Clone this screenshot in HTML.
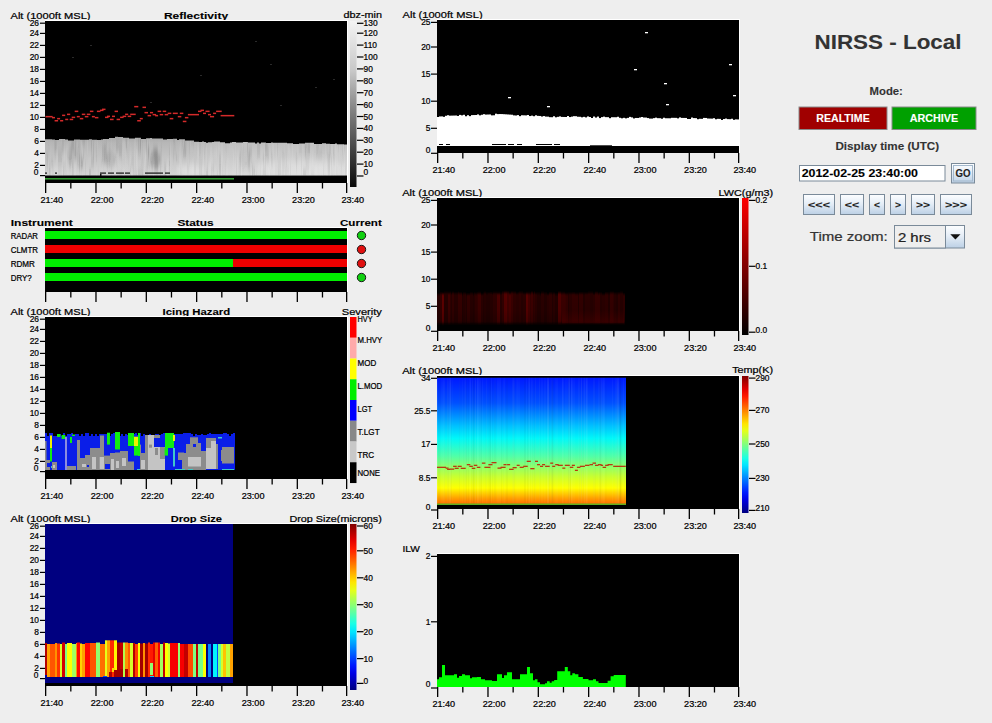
<!DOCTYPE html><html><head><meta charset="utf-8"><style>html,body{margin:0;padding:0;background:#eeeeee;overflow:hidden}svg{display:block}text{font-family:"Liberation Sans",sans-serif}</style></head><body>
<svg width="992" height="723" viewBox="0 0 992 723">
<rect x="0.00" y="0.00" width="992.00" height="723.00" fill="#eeeeee"/>
<text x="10.5" y="18.6" font-size="9.4" text-anchor="start" fill="#000" stroke="#000" stroke-width="0.22" textLength="80.0" lengthAdjust="spacingAndGlyphs">Alt (1000ft MSL)</text>
<text x="163.9" y="18.6" font-size="9.4" font-weight="bold" text-anchor="start" fill="#000" stroke="#000" stroke-width="0.1" textLength="64.2" lengthAdjust="spacingAndGlyphs">Reflectivity</text>
<text x="343.6" y="18.4" font-size="9.4" text-anchor="start" fill="#000" stroke="#000" stroke-width="0.22" textLength="38.4" lengthAdjust="spacingAndGlyphs">dbz-min</text>
<rect x="45.00" y="20.00" width="303.00" height="1.00" fill="#ffffff"/>
<rect x="347.00" y="20.00" width="1.00" height="163.00" fill="#ffffff"/>
<rect x="45.00" y="21.00" width="302.00" height="162.00" fill="#000"/>
<defs><linearGradient id="gcl" x1="0" y1="0" x2="0" y2="1"><stop offset="0" stop-color="#a0a0a0"/><stop offset="0.25" stop-color="#b6b6b6"/><stop offset="1" stop-color="#d4d4d4"/></linearGradient><filter id="fbv" x="-5%" y="-20%" width="110%" height="140%"><feGaussianBlur stdDeviation="0.7 3"/></filter><clipPath id="cpcl"><rect x="45" y="130" width="302" height="45.5"/></clipPath></defs>
<rect x="45.00" y="132.00" width="302.00" height="43.50" fill="url(#gcl)"/>
<g filter="url(#fbv)" clip-path="url(#cpcl)">
<rect x="129.00" y="150.47" width="3.00" height="13.36" fill="rgba(255,255,255,0.040)"/>
<rect x="307.00" y="141.79" width="3.00" height="15.55" fill="rgba(0,0,0,0.075)"/>
<rect x="80.00" y="140.36" width="3.00" height="20.03" fill="rgba(255,255,255,0.085)"/>
<rect x="253.00" y="157.79" width="1.00" height="5.68" fill="rgba(0,0,0,0.043)"/>
<rect x="233.00" y="135.86" width="1.00" height="19.82" fill="rgba(255,255,255,0.026)"/>
<rect x="277.00" y="140.96" width="1.00" height="19.57" fill="rgba(0,0,0,0.048)"/>
<rect x="285.00" y="167.04" width="1.00" height="9.70" fill="rgba(0,0,0,0.075)"/>
<rect x="107.00" y="155.72" width="1.00" height="16.18" fill="rgba(0,0,0,0.047)"/>
<rect x="319.00" y="150.16" width="3.00" height="12.30" fill="rgba(0,0,0,0.052)"/>
<rect x="242.00" y="144.83" width="3.00" height="21.68" fill="rgba(255,255,255,0.031)"/>
<rect x="46.00" y="153.19" width="2.00" height="16.01" fill="rgba(0,0,0,0.072)"/>
<rect x="329.00" y="171.26" width="2.00" height="7.25" fill="rgba(255,255,255,0.067)"/>
<rect x="222.00" y="163.19" width="1.00" height="23.59" fill="rgba(0,0,0,0.037)"/>
<rect x="264.00" y="148.87" width="1.00" height="18.67" fill="rgba(255,255,255,0.067)"/>
<rect x="253.00" y="168.96" width="2.00" height="8.26" fill="rgba(0,0,0,0.072)"/>
<rect x="296.00" y="153.73" width="1.00" height="18.34" fill="rgba(0,0,0,0.086)"/>
<rect x="269.00" y="164.80" width="1.00" height="20.48" fill="rgba(255,255,255,0.054)"/>
<rect x="177.00" y="159.36" width="2.00" height="5.70" fill="rgba(0,0,0,0.037)"/>
<rect x="119.00" y="171.39" width="3.00" height="19.92" fill="rgba(0,0,0,0.054)"/>
<rect x="59.00" y="170.25" width="2.00" height="22.99" fill="rgba(0,0,0,0.046)"/>
<rect x="263.00" y="152.92" width="2.00" height="23.05" fill="rgba(0,0,0,0.053)"/>
<rect x="116.00" y="163.43" width="1.00" height="5.20" fill="rgba(255,255,255,0.068)"/>
<rect x="180.00" y="156.97" width="2.00" height="17.88" fill="rgba(255,255,255,0.080)"/>
<rect x="252.00" y="162.81" width="3.00" height="21.24" fill="rgba(0,0,0,0.030)"/>
<rect x="93.00" y="141.91" width="1.00" height="17.83" fill="rgba(0,0,0,0.075)"/>
<rect x="189.00" y="139.68" width="1.00" height="15.77" fill="rgba(0,0,0,0.043)"/>
<rect x="130.00" y="141.72" width="1.00" height="22.15" fill="rgba(255,255,255,0.034)"/>
<rect x="303.00" y="167.33" width="3.00" height="20.48" fill="rgba(0,0,0,0.075)"/>
<rect x="77.00" y="149.72" width="2.00" height="16.34" fill="rgba(0,0,0,0.080)"/>
<rect x="66.00" y="144.05" width="3.00" height="8.12" fill="rgba(255,255,255,0.071)"/>
<rect x="338.00" y="138.65" width="2.00" height="17.02" fill="rgba(255,255,255,0.056)"/>
<rect x="194.00" y="160.88" width="2.00" height="15.52" fill="rgba(0,0,0,0.059)"/>
<rect x="148.00" y="148.14" width="1.00" height="11.36" fill="rgba(0,0,0,0.090)"/>
<rect x="82.00" y="158.18" width="1.00" height="21.15" fill="rgba(255,255,255,0.088)"/>
<rect x="271.00" y="152.42" width="1.00" height="15.26" fill="rgba(0,0,0,0.081)"/>
<rect x="69.00" y="159.48" width="3.00" height="5.84" fill="rgba(255,255,255,0.039)"/>
<rect x="263.00" y="151.87" width="1.00" height="9.73" fill="rgba(0,0,0,0.047)"/>
<rect x="64.00" y="152.75" width="3.00" height="14.84" fill="rgba(255,255,255,0.070)"/>
<rect x="179.00" y="144.08" width="1.00" height="23.33" fill="rgba(255,255,255,0.047)"/>
<rect x="127.00" y="146.57" width="1.00" height="11.23" fill="rgba(0,0,0,0.047)"/>
<rect x="85.00" y="154.33" width="1.00" height="17.40" fill="rgba(255,255,255,0.046)"/>
<rect x="130.00" y="161.05" width="1.00" height="9.12" fill="rgba(255,255,255,0.043)"/>
<rect x="178.00" y="138.03" width="1.00" height="5.57" fill="rgba(255,255,255,0.056)"/>
<rect x="304.00" y="142.40" width="3.00" height="16.96" fill="rgba(0,0,0,0.039)"/>
<rect x="284.00" y="149.86" width="3.00" height="14.21" fill="rgba(255,255,255,0.067)"/>
<rect x="184.00" y="138.66" width="2.00" height="24.50" fill="rgba(0,0,0,0.035)"/>
<rect x="54.00" y="137.77" width="3.00" height="16.60" fill="rgba(0,0,0,0.048)"/>
<rect x="167.00" y="171.66" width="1.00" height="23.83" fill="rgba(255,255,255,0.030)"/>
<rect x="277.00" y="148.71" width="3.00" height="5.06" fill="rgba(255,255,255,0.032)"/>
<rect x="316.00" y="166.11" width="1.00" height="11.17" fill="rgba(255,255,255,0.049)"/>
<rect x="160.00" y="156.27" width="1.00" height="21.48" fill="rgba(0,0,0,0.061)"/>
<rect x="343.00" y="137.70" width="1.00" height="13.72" fill="rgba(255,255,255,0.078)"/>
<rect x="122.00" y="137.21" width="3.00" height="21.30" fill="rgba(255,255,255,0.062)"/>
<rect x="218.00" y="140.65" width="1.00" height="8.07" fill="rgba(255,255,255,0.040)"/>
<rect x="81.00" y="159.72" width="2.00" height="8.73" fill="rgba(255,255,255,0.027)"/>
<rect x="183.00" y="148.04" width="3.00" height="8.24" fill="rgba(0,0,0,0.061)"/>
<rect x="125.00" y="136.20" width="1.00" height="9.65" fill="rgba(0,0,0,0.045)"/>
<rect x="144.00" y="161.93" width="1.00" height="15.49" fill="rgba(255,255,255,0.025)"/>
<rect x="302.00" y="136.50" width="1.00" height="12.05" fill="rgba(255,255,255,0.057)"/>
<rect x="55.00" y="161.26" width="1.00" height="14.88" fill="rgba(255,255,255,0.031)"/>
<rect x="188.00" y="160.14" width="1.00" height="9.35" fill="rgba(255,255,255,0.074)"/>
<rect x="203.00" y="149.44" width="1.00" height="23.84" fill="rgba(255,255,255,0.086)"/>
<rect x="225.00" y="141.41" width="1.00" height="10.30" fill="rgba(0,0,0,0.022)"/>
<rect x="138.00" y="169.44" width="2.00" height="15.72" fill="rgba(0,0,0,0.082)"/>
<rect x="275.00" y="162.38" width="3.00" height="22.66" fill="rgba(0,0,0,0.045)"/>
<rect x="136.00" y="148.02" width="1.00" height="18.44" fill="rgba(255,255,255,0.081)"/>
<rect x="261.00" y="170.32" width="1.00" height="20.10" fill="rgba(255,255,255,0.089)"/>
<rect x="153.00" y="169.32" width="1.00" height="15.46" fill="rgba(255,255,255,0.083)"/>
<rect x="127.00" y="143.88" width="1.00" height="13.49" fill="rgba(255,255,255,0.065)"/>
<rect x="153.00" y="144.36" width="2.00" height="13.60" fill="rgba(0,0,0,0.046)"/>
<rect x="65.00" y="154.90" width="3.00" height="14.18" fill="rgba(255,255,255,0.022)"/>
<rect x="199.00" y="162.25" width="3.00" height="19.62" fill="rgba(0,0,0,0.090)"/>
<rect x="61.00" y="135.14" width="3.00" height="18.29" fill="rgba(255,255,255,0.061)"/>
<rect x="145.00" y="152.98" width="1.00" height="22.40" fill="rgba(255,255,255,0.059)"/>
<rect x="58.00" y="148.71" width="3.00" height="21.53" fill="rgba(0,0,0,0.055)"/>
<rect x="333.00" y="158.25" width="1.00" height="16.97" fill="rgba(255,255,255,0.069)"/>
<rect x="236.00" y="159.27" width="1.00" height="19.69" fill="rgba(0,0,0,0.052)"/>
<rect x="215.00" y="167.95" width="1.00" height="6.54" fill="rgba(255,255,255,0.042)"/>
<rect x="180.00" y="138.86" width="1.00" height="17.34" fill="rgba(255,255,255,0.065)"/>
<rect x="299.00" y="163.53" width="2.00" height="14.90" fill="rgba(255,255,255,0.022)"/>
<rect x="49.00" y="142.15" width="3.00" height="7.82" fill="rgba(255,255,255,0.024)"/>
<rect x="75.00" y="139.56" width="1.00" height="22.61" fill="rgba(0,0,0,0.066)"/>
<rect x="272.00" y="153.05" width="1.00" height="15.75" fill="rgba(0,0,0,0.058)"/>
<rect x="232.00" y="140.28" width="1.00" height="13.04" fill="rgba(255,255,255,0.051)"/>
<rect x="269.00" y="164.21" width="1.00" height="5.40" fill="rgba(0,0,0,0.065)"/>
<rect x="345.00" y="168.38" width="1.00" height="19.98" fill="rgba(0,0,0,0.044)"/>
<rect x="183.00" y="147.10" width="1.00" height="11.57" fill="rgba(0,0,0,0.035)"/>
<rect x="148.00" y="140.61" width="1.00" height="17.48" fill="rgba(0,0,0,0.079)"/>
<rect x="130.00" y="154.78" width="1.00" height="7.31" fill="rgba(255,255,255,0.048)"/>
<rect x="151.00" y="154.93" width="1.00" height="6.70" fill="rgba(255,255,255,0.037)"/>
<rect x="170.00" y="142.54" width="1.00" height="16.53" fill="rgba(255,255,255,0.077)"/>
<rect x="249.00" y="146.20" width="3.00" height="11.36" fill="rgba(0,0,0,0.084)"/>
<rect x="62.00" y="156.35" width="3.00" height="5.93" fill="rgba(255,255,255,0.048)"/>
<rect x="138.00" y="136.40" width="3.00" height="17.81" fill="rgba(0,0,0,0.075)"/>
<rect x="179.00" y="154.63" width="2.00" height="8.28" fill="rgba(255,255,255,0.044)"/>
<rect x="244.00" y="168.91" width="3.00" height="10.86" fill="rgba(255,255,255,0.028)"/>
<rect x="211.00" y="165.36" width="3.00" height="7.76" fill="rgba(0,0,0,0.070)"/>
<rect x="102.00" y="144.98" width="3.00" height="18.54" fill="rgba(0,0,0,0.083)"/>
<rect x="307.00" y="160.56" width="2.00" height="17.55" fill="rgba(255,255,255,0.053)"/>
<rect x="146.00" y="136.73" width="1.00" height="17.52" fill="rgba(0,0,0,0.063)"/>
<rect x="262.00" y="153.60" width="2.00" height="8.25" fill="rgba(0,0,0,0.035)"/>
<rect x="51.00" y="159.68" width="2.00" height="9.61" fill="rgba(0,0,0,0.066)"/>
<rect x="315.00" y="166.30" width="1.00" height="8.80" fill="rgba(255,255,255,0.069)"/>
<rect x="233.00" y="152.76" width="1.00" height="11.57" fill="rgba(255,255,255,0.082)"/>
<rect x="192.00" y="160.13" width="1.00" height="20.44" fill="rgba(255,255,255,0.067)"/>
<rect x="170.00" y="161.61" width="1.00" height="11.08" fill="rgba(255,255,255,0.059)"/>
<rect x="247.00" y="136.03" width="1.00" height="16.56" fill="rgba(0,0,0,0.084)"/>
<rect x="107.00" y="167.27" width="3.00" height="22.87" fill="rgba(255,255,255,0.078)"/>
<rect x="308.00" y="142.83" width="2.00" height="8.34" fill="rgba(0,0,0,0.083)"/>
<rect x="111.00" y="154.21" width="1.00" height="5.97" fill="rgba(255,255,255,0.070)"/>
<rect x="277.00" y="139.11" width="1.00" height="14.47" fill="rgba(0,0,0,0.025)"/>
<rect x="306.00" y="156.57" width="3.00" height="18.06" fill="rgba(0,0,0,0.081)"/>
<rect x="328.00" y="139.29" width="2.00" height="11.98" fill="rgba(255,255,255,0.069)"/>
<rect x="282.00" y="158.13" width="1.00" height="11.25" fill="rgba(255,255,255,0.069)"/>
<rect x="316.00" y="147.77" width="1.00" height="23.72" fill="rgba(255,255,255,0.045)"/>
<rect x="187.00" y="164.39" width="2.00" height="8.23" fill="rgba(0,0,0,0.088)"/>
<rect x="154.00" y="153.67" width="1.00" height="5.84" fill="rgba(0,0,0,0.022)"/>
<rect x="110.00" y="166.34" width="1.00" height="17.43" fill="rgba(255,255,255,0.032)"/>
<rect x="133.00" y="169.36" width="3.00" height="11.17" fill="rgba(0,0,0,0.038)"/>
<rect x="241.00" y="164.29" width="1.00" height="22.10" fill="rgba(255,255,255,0.072)"/>
<rect x="198.00" y="146.88" width="1.00" height="11.08" fill="rgba(255,255,255,0.050)"/>
<rect x="282.00" y="152.05" width="3.00" height="18.86" fill="rgba(0,0,0,0.075)"/>
<rect x="70.00" y="167.57" width="3.00" height="23.23" fill="rgba(255,255,255,0.026)"/>
<rect x="130.00" y="165.23" width="1.00" height="23.19" fill="rgba(0,0,0,0.063)"/>
<rect x="203.00" y="154.28" width="3.00" height="19.44" fill="rgba(255,255,255,0.020)"/>
<rect x="91.00" y="156.24" width="3.00" height="12.27" fill="rgba(0,0,0,0.062)"/>
<rect x="295.00" y="162.74" width="1.00" height="8.73" fill="rgba(255,255,255,0.041)"/>
<rect x="199.00" y="137.55" width="2.00" height="23.23" fill="rgba(0,0,0,0.031)"/>
<rect x="330.00" y="144.68" width="1.00" height="12.05" fill="rgba(0,0,0,0.058)"/>
<rect x="85.00" y="158.73" width="1.00" height="22.77" fill="rgba(0,0,0,0.052)"/>
<rect x="327.00" y="152.51" width="3.00" height="20.43" fill="rgba(0,0,0,0.068)"/>
<rect x="318.00" y="150.55" width="1.00" height="9.59" fill="rgba(255,255,255,0.083)"/>
<rect x="136.00" y="171.14" width="1.00" height="15.56" fill="rgba(0,0,0,0.083)"/>
<rect x="180.00" y="165.81" width="2.00" height="14.62" fill="rgba(0,0,0,0.062)"/>
<rect x="89.00" y="167.02" width="2.00" height="17.87" fill="rgba(0,0,0,0.064)"/>
<rect x="333.00" y="170.82" width="1.00" height="9.06" fill="rgba(255,255,255,0.058)"/>
<rect x="265.00" y="160.85" width="1.00" height="24.93" fill="rgba(0,0,0,0.079)"/>
<rect x="265.00" y="142.11" width="2.00" height="19.23" fill="rgba(0,0,0,0.088)"/>
<rect x="248.00" y="153.19" width="2.00" height="16.73" fill="rgba(0,0,0,0.083)"/>
<rect x="173.00" y="148.84" width="1.00" height="11.82" fill="rgba(0,0,0,0.050)"/>
<rect x="164.00" y="166.96" width="1.00" height="7.07" fill="rgba(255,255,255,0.066)"/>
<rect x="342.00" y="141.39" width="1.00" height="16.90" fill="rgba(255,255,255,0.070)"/>
<rect x="62.00" y="170.40" width="1.00" height="21.96" fill="rgba(255,255,255,0.054)"/>
<rect x="131.00" y="170.53" width="1.00" height="12.54" fill="rgba(255,255,255,0.041)"/>
<rect x="119.00" y="141.89" width="3.00" height="16.72" fill="rgba(0,0,0,0.065)"/>
<rect x="241.00" y="147.69" width="1.00" height="18.44" fill="rgba(255,255,255,0.034)"/>
<rect x="95.00" y="139.19" width="2.00" height="11.73" fill="rgba(0,0,0,0.028)"/>
<rect x="326.00" y="149.85" width="3.00" height="19.61" fill="rgba(255,255,255,0.039)"/>
<rect x="72.00" y="162.81" width="2.00" height="24.51" fill="rgba(0,0,0,0.057)"/>
<rect x="309.00" y="153.45" width="3.00" height="11.38" fill="rgba(0,0,0,0.027)"/>
<rect x="290.00" y="163.18" width="1.00" height="22.68" fill="rgba(0,0,0,0.076)"/>
<rect x="339.00" y="144.82" width="3.00" height="14.45" fill="rgba(255,255,255,0.039)"/>
<rect x="164.00" y="163.89" width="2.00" height="23.48" fill="rgba(0,0,0,0.074)"/>
<rect x="142.00" y="146.58" width="3.00" height="21.82" fill="rgba(255,255,255,0.040)"/>
<rect x="58.00" y="170.58" width="3.00" height="6.80" fill="rgba(255,255,255,0.039)"/>
<rect x="285.00" y="146.82" width="2.00" height="21.87" fill="rgba(0,0,0,0.050)"/>
<rect x="83.00" y="163.95" width="1.00" height="7.79" fill="rgba(255,255,255,0.058)"/>
<rect x="235.00" y="158.26" width="3.00" height="15.60" fill="rgba(255,255,255,0.088)"/>
<rect x="99.00" y="168.43" width="3.00" height="20.05" fill="rgba(255,255,255,0.030)"/>
<rect x="297.00" y="142.07" width="1.00" height="20.93" fill="rgba(255,255,255,0.036)"/>
<rect x="131.00" y="158.99" width="1.00" height="9.05" fill="rgba(0,0,0,0.043)"/>
<rect x="335.00" y="139.10" width="2.00" height="13.03" fill="rgba(255,255,255,0.079)"/>
<rect x="63.00" y="160.44" width="3.00" height="21.67" fill="rgba(0,0,0,0.037)"/>
<rect x="261.00" y="147.77" width="1.00" height="12.48" fill="rgba(255,255,255,0.053)"/>
<rect x="55.00" y="154.95" width="3.00" height="7.56" fill="rgba(255,255,255,0.088)"/>
<rect x="206.00" y="169.98" width="2.00" height="14.28" fill="rgba(0,0,0,0.073)"/>
<rect x="70.00" y="144.69" width="1.00" height="11.35" fill="rgba(0,0,0,0.033)"/>
<rect x="336.00" y="136.35" width="1.00" height="10.28" fill="rgba(0,0,0,0.079)"/>
<rect x="57.00" y="171.20" width="2.00" height="10.18" fill="rgba(255,255,255,0.069)"/>
<rect x="239.00" y="152.55" width="2.00" height="20.68" fill="rgba(0,0,0,0.038)"/>
<rect x="169.00" y="154.72" width="3.00" height="11.74" fill="rgba(255,255,255,0.020)"/>
<rect x="342.00" y="141.08" width="1.00" height="15.61" fill="rgba(0,0,0,0.054)"/>
<rect x="118.00" y="141.67" width="1.00" height="21.59" fill="rgba(255,255,255,0.030)"/>
<rect x="289.00" y="169.11" width="3.00" height="17.70" fill="rgba(255,255,255,0.034)"/>
<rect x="205.00" y="136.88" width="2.00" height="7.89" fill="rgba(0,0,0,0.065)"/>
<rect x="197.00" y="148.31" width="2.00" height="12.41" fill="rgba(255,255,255,0.081)"/>
<rect x="326.00" y="136.22" width="3.00" height="20.69" fill="rgba(0,0,0,0.037)"/>
<rect x="157.00" y="158.90" width="1.00" height="11.29" fill="rgba(0,0,0,0.031)"/>
<rect x="338.00" y="136.37" width="1.00" height="14.21" fill="rgba(0,0,0,0.055)"/>
<rect x="310.00" y="151.15" width="1.00" height="18.69" fill="rgba(255,255,255,0.036)"/>
<rect x="219.00" y="152.81" width="2.00" height="23.91" fill="rgba(0,0,0,0.089)"/>
<rect x="263.00" y="169.65" width="3.00" height="10.69" fill="rgba(0,0,0,0.021)"/>
<rect x="140.00" y="137.48" width="1.00" height="11.69" fill="rgba(0,0,0,0.071)"/>
<rect x="268.00" y="148.23" width="1.00" height="21.41" fill="rgba(255,255,255,0.036)"/>
<rect x="169.00" y="161.70" width="1.00" height="14.81" fill="rgba(0,0,0,0.063)"/>
<rect x="225.00" y="167.73" width="3.00" height="21.15" fill="rgba(255,255,255,0.074)"/>
<rect x="241.00" y="171.28" width="1.00" height="6.61" fill="rgba(255,255,255,0.046)"/>
<rect x="311.00" y="137.11" width="2.00" height="11.48" fill="rgba(255,255,255,0.041)"/>
<rect x="55.00" y="141.42" width="1.00" height="20.15" fill="rgba(0,0,0,0.047)"/>
<rect x="82.00" y="136.15" width="3.00" height="9.75" fill="rgba(0,0,0,0.067)"/>
<rect x="126.00" y="158.01" width="3.00" height="6.55" fill="rgba(0,0,0,0.021)"/>
<rect x="253.00" y="157.66" width="1.00" height="7.67" fill="rgba(255,255,255,0.068)"/>
<rect x="115.00" y="163.88" width="2.00" height="21.97" fill="rgba(255,255,255,0.089)"/>
<rect x="110.00" y="163.89" width="1.00" height="11.21" fill="rgba(255,255,255,0.064)"/>
<rect x="197.00" y="141.55" width="2.00" height="12.14" fill="rgba(255,255,255,0.048)"/>
<rect x="331.00" y="154.95" width="1.00" height="13.44" fill="rgba(0,0,0,0.086)"/>
<rect x="71.00" y="139.78" width="1.00" height="22.98" fill="rgba(0,0,0,0.065)"/>
<rect x="193.00" y="158.94" width="1.00" height="21.07" fill="rgba(255,255,255,0.044)"/>
<rect x="63.00" y="146.54" width="2.00" height="14.61" fill="rgba(255,255,255,0.073)"/>
<rect x="49.00" y="166.35" width="1.00" height="8.06" fill="rgba(0,0,0,0.059)"/>
<rect x="204.00" y="147.86" width="1.00" height="13.88" fill="rgba(0,0,0,0.027)"/>
<rect x="118.00" y="162.06" width="3.00" height="7.59" fill="rgba(255,255,255,0.084)"/>
<rect x="305.00" y="139.41" width="2.00" height="13.93" fill="rgba(0,0,0,0.059)"/>
<rect x="83.00" y="151.08" width="1.00" height="10.70" fill="rgba(0,0,0,0.046)"/>
<rect x="154.00" y="148.50" width="3.00" height="16.95" fill="rgba(0,0,0,0.054)"/>
<rect x="190.00" y="137.31" width="3.00" height="11.15" fill="rgba(255,255,255,0.050)"/>
<rect x="257.00" y="135.86" width="3.00" height="22.38" fill="rgba(0,0,0,0.075)"/>
<rect x="241.00" y="154.95" width="1.00" height="18.08" fill="rgba(255,255,255,0.081)"/>
<rect x="89.00" y="170.30" width="2.00" height="13.90" fill="rgba(0,0,0,0.046)"/>
<rect x="105.00" y="144.95" width="1.00" height="8.87" fill="rgba(0,0,0,0.065)"/>
<rect x="46.00" y="158.71" width="1.00" height="17.37" fill="rgba(255,255,255,0.086)"/>
<rect x="327.00" y="165.15" width="1.00" height="15.59" fill="rgba(255,255,255,0.063)"/>
<rect x="155.00" y="146.11" width="3.00" height="24.01" fill="rgba(0,0,0,0.076)"/>
<rect x="112.00" y="151.16" width="3.00" height="24.86" fill="rgba(255,255,255,0.085)"/>
<rect x="145.00" y="151.38" width="1.00" height="7.69" fill="rgba(255,255,255,0.034)"/>
<rect x="116.00" y="140.53" width="3.00" height="10.97" fill="rgba(0,0,0,0.076)"/>
<rect x="304.00" y="153.11" width="3.00" height="5.59" fill="rgba(255,255,255,0.059)"/>
<rect x="336.00" y="165.58" width="1.00" height="13.93" fill="rgba(0,0,0,0.045)"/>
<rect x="301.00" y="156.60" width="1.00" height="20.56" fill="rgba(0,0,0,0.067)"/>
<rect x="234.00" y="136.46" width="1.00" height="5.88" fill="rgba(255,255,255,0.064)"/>
<rect x="49.00" y="159.38" width="2.00" height="24.61" fill="rgba(0,0,0,0.040)"/>
<rect x="322.00" y="162.35" width="2.00" height="23.54" fill="rgba(255,255,255,0.069)"/>
<rect x="207.00" y="159.68" width="3.00" height="19.43" fill="rgba(0,0,0,0.020)"/>
<rect x="284.00" y="148.75" width="2.00" height="17.02" fill="rgba(255,255,255,0.041)"/>
<rect x="63.00" y="168.79" width="1.00" height="14.06" fill="rgba(0,0,0,0.069)"/>
<rect x="78.00" y="143.78" width="3.00" height="5.20" fill="rgba(0,0,0,0.077)"/>
<rect x="278.00" y="159.23" width="3.00" height="23.94" fill="rgba(0,0,0,0.084)"/>
<rect x="252.00" y="165.56" width="1.00" height="18.38" fill="rgba(0,0,0,0.077)"/>
<rect x="335.00" y="142.39" width="3.00" height="23.70" fill="rgba(255,255,255,0.079)"/>
<rect x="226.00" y="144.03" width="1.00" height="19.28" fill="rgba(0,0,0,0.022)"/>
<rect x="237.00" y="149.50" width="3.00" height="23.83" fill="rgba(255,255,255,0.037)"/>
<rect x="111.00" y="140.75" width="1.00" height="6.39" fill="rgba(255,255,255,0.050)"/>
<rect x="322.00" y="140.58" width="3.00" height="23.51" fill="rgba(0,0,0,0.028)"/>
<rect x="91.00" y="138.00" width="1.00" height="14.93" fill="rgba(0,0,0,0.087)"/>
<rect x="104.00" y="143.34" width="2.00" height="19.99" fill="rgba(255,255,255,0.084)"/>
<rect x="200.00" y="159.39" width="1.00" height="15.54" fill="rgba(255,255,255,0.036)"/>
<rect x="342.00" y="164.67" width="3.00" height="10.64" fill="rgba(255,255,255,0.083)"/>
<rect x="331.00" y="142.99" width="2.00" height="22.13" fill="rgba(255,255,255,0.080)"/>
<rect x="218.00" y="144.96" width="3.00" height="14.46" fill="rgba(255,255,255,0.064)"/>
<rect x="66.00" y="168.00" width="1.00" height="20.09" fill="rgba(0,0,0,0.034)"/>
<rect x="216.00" y="146.35" width="1.00" height="13.09" fill="rgba(255,255,255,0.056)"/>
<rect x="331.00" y="169.10" width="3.00" height="20.43" fill="rgba(0,0,0,0.037)"/>
<rect x="236.00" y="157.90" width="3.00" height="23.52" fill="rgba(0,0,0,0.021)"/>
<rect x="56.00" y="162.36" width="2.00" height="12.80" fill="rgba(255,255,255,0.026)"/>
<rect x="264.00" y="165.53" width="1.00" height="21.47" fill="rgba(0,0,0,0.049)"/>
<rect x="176.00" y="154.62" width="1.00" height="6.80" fill="rgba(0,0,0,0.089)"/>
<rect x="221.00" y="169.70" width="1.00" height="20.55" fill="rgba(255,255,255,0.037)"/>
<rect x="72.00" y="135.89" width="2.00" height="14.15" fill="rgba(0,0,0,0.090)"/>
<rect x="182.00" y="160.85" width="1.00" height="22.18" fill="rgba(0,0,0,0.025)"/>
<rect x="329.00" y="137.34" width="1.00" height="13.15" fill="rgba(0,0,0,0.085)"/>
<rect x="286.00" y="158.89" width="1.00" height="20.23" fill="rgba(0,0,0,0.052)"/>
<rect x="191.00" y="137.73" width="3.00" height="6.14" fill="rgba(0,0,0,0.086)"/>
<rect x="125.00" y="142.43" width="1.00" height="12.80" fill="rgba(255,255,255,0.076)"/>
<rect x="212.00" y="154.86" width="1.00" height="24.90" fill="rgba(255,255,255,0.077)"/>
<rect x="74.00" y="137.35" width="3.00" height="22.57" fill="rgba(0,0,0,0.024)"/>
<rect x="326.00" y="170.92" width="1.00" height="8.37" fill="rgba(255,255,255,0.074)"/>
<rect x="272.00" y="141.73" width="2.00" height="15.53" fill="rgba(255,255,255,0.074)"/>
<rect x="303.00" y="168.77" width="3.00" height="11.29" fill="rgba(0,0,0,0.078)"/>
<rect x="344.00" y="150.32" width="1.00" height="24.61" fill="rgba(255,255,255,0.088)"/>
<rect x="185.00" y="138.30" width="2.00" height="17.26" fill="rgba(0,0,0,0.029)"/>
<rect x="239.00" y="170.55" width="2.00" height="23.83" fill="rgba(0,0,0,0.026)"/>
<rect x="132.00" y="171.06" width="1.00" height="24.16" fill="rgba(255,255,255,0.043)"/>
<rect x="341.00" y="165.13" width="1.00" height="6.03" fill="rgba(0,0,0,0.062)"/>
<rect x="236.00" y="157.09" width="3.00" height="11.86" fill="rgba(255,255,255,0.064)"/>
<rect x="270.00" y="167.11" width="1.00" height="19.90" fill="rgba(0,0,0,0.038)"/>
<rect x="156.00" y="169.08" width="2.00" height="21.60" fill="rgba(0,0,0,0.028)"/>
<rect x="256.00" y="171.64" width="1.00" height="8.78" fill="rgba(0,0,0,0.085)"/>
<rect x="247.00" y="151.55" width="1.00" height="12.64" fill="rgba(0,0,0,0.029)"/>
<rect x="226.00" y="157.12" width="3.00" height="6.90" fill="rgba(255,255,255,0.045)"/>
<rect x="276.00" y="147.64" width="1.00" height="9.42" fill="rgba(255,255,255,0.070)"/>
<rect x="206.00" y="143.76" width="1.00" height="20.74" fill="rgba(255,255,255,0.082)"/>
<rect x="147.00" y="143.55" width="1.00" height="19.87" fill="rgba(255,255,255,0.072)"/>
<rect x="58.00" y="170.02" width="1.00" height="22.35" fill="rgba(0,0,0,0.051)"/>
<rect x="260.00" y="166.14" width="1.00" height="10.00" fill="rgba(0,0,0,0.044)"/>
<rect x="328.00" y="158.19" width="2.00" height="19.85" fill="rgba(0,0,0,0.066)"/>
<rect x="147.00" y="145.72" width="3.00" height="22.38" fill="rgba(0,0,0,0.073)"/>
<rect x="101.00" y="168.65" width="2.00" height="7.24" fill="rgba(255,255,255,0.087)"/>
<rect x="134.00" y="151.40" width="1.00" height="16.23" fill="rgba(255,255,255,0.069)"/>
<rect x="319.00" y="155.96" width="3.00" height="16.06" fill="rgba(255,255,255,0.038)"/>
<rect x="280.00" y="170.59" width="2.00" height="24.91" fill="rgba(255,255,255,0.039)"/>
<rect x="145.00" y="150.93" width="1.00" height="15.55" fill="rgba(255,255,255,0.072)"/>
<rect x="167.00" y="159.40" width="2.00" height="21.60" fill="rgba(255,255,255,0.084)"/>
<rect x="46.00" y="152.53" width="3.00" height="6.21" fill="rgba(0,0,0,0.032)"/>
<rect x="333.00" y="155.05" width="2.00" height="13.70" fill="rgba(0,0,0,0.044)"/>
<rect x="310.00" y="155.31" width="3.00" height="7.66" fill="rgba(255,255,255,0.089)"/>
<rect x="249.00" y="164.45" width="2.00" height="15.01" fill="rgba(0,0,0,0.023)"/>
<rect x="169.00" y="147.47" width="1.00" height="16.98" fill="rgba(0,0,0,0.055)"/>
<rect x="237.00" y="171.83" width="1.00" height="19.03" fill="rgba(255,255,255,0.030)"/>
<rect x="320.00" y="170.82" width="1.00" height="15.32" fill="rgba(255,255,255,0.063)"/>
<rect x="121.00" y="165.94" width="3.00" height="16.42" fill="rgba(255,255,255,0.033)"/>
<rect x="210.00" y="146.55" width="2.00" height="19.22" fill="rgba(255,255,255,0.090)"/>
<rect x="253.00" y="152.98" width="2.00" height="12.54" fill="rgba(255,255,255,0.030)"/>
<rect x="289.00" y="139.30" width="2.00" height="8.65" fill="rgba(0,0,0,0.058)"/>
<rect x="139.00" y="135.63" width="1.00" height="14.35" fill="rgba(255,255,255,0.075)"/>
<rect x="278.00" y="170.41" width="1.00" height="23.64" fill="rgba(0,0,0,0.057)"/>
<rect x="95.00" y="137.58" width="3.00" height="12.48" fill="rgba(255,255,255,0.072)"/>
<rect x="109.00" y="144.09" width="1.00" height="19.24" fill="rgba(0,0,0,0.028)"/>
<rect x="263.00" y="156.21" width="2.00" height="22.36" fill="rgba(255,255,255,0.084)"/>
<rect x="88.00" y="153.65" width="3.00" height="9.99" fill="rgba(255,255,255,0.032)"/>
<rect x="182.00" y="135.83" width="1.00" height="12.86" fill="rgba(0,0,0,0.042)"/>
<rect x="209.00" y="157.71" width="1.00" height="21.10" fill="rgba(255,255,255,0.079)"/>
<rect x="109.00" y="158.61" width="1.00" height="10.39" fill="rgba(0,0,0,0.036)"/>
<rect x="286.00" y="139.12" width="1.00" height="24.72" fill="rgba(255,255,255,0.026)"/>
<rect x="251.00" y="160.17" width="1.00" height="9.00" fill="rgba(0,0,0,0.056)"/>
<rect x="48.00" y="145.19" width="2.00" height="16.78" fill="rgba(0,0,0,0.025)"/>
<rect x="225.00" y="161.39" width="1.00" height="16.84" fill="rgba(0,0,0,0.042)"/>
<rect x="98.00" y="168.01" width="1.00" height="10.48" fill="rgba(0,0,0,0.025)"/>
<rect x="302.00" y="155.11" width="1.00" height="5.98" fill="rgba(255,255,255,0.058)"/>
<rect x="161.00" y="149.48" width="1.00" height="19.96" fill="rgba(255,255,255,0.040)"/>
<rect x="289.00" y="146.74" width="2.00" height="9.47" fill="rgba(255,255,255,0.029)"/>
<rect x="106.00" y="162.80" width="1.00" height="12.30" fill="rgba(255,255,255,0.079)"/>
<rect x="316.00" y="138.92" width="3.00" height="22.26" fill="rgba(0,0,0,0.084)"/>
<rect x="140.00" y="168.17" width="3.00" height="11.78" fill="rgba(0,0,0,0.075)"/>
<rect x="343.00" y="138.36" width="3.00" height="13.22" fill="rgba(255,255,255,0.043)"/>
<rect x="329.00" y="150.89" width="1.00" height="7.77" fill="rgba(0,0,0,0.088)"/>
<rect x="337.00" y="168.58" width="1.00" height="9.37" fill="rgba(0,0,0,0.028)"/>
<rect x="104.00" y="143.62" width="2.00" height="18.92" fill="rgba(0,0,0,0.082)"/>
<rect x="126.00" y="138.18" width="1.00" height="12.65" fill="rgba(0,0,0,0.083)"/>
<rect x="180.00" y="161.95" width="3.00" height="14.32" fill="rgba(255,255,255,0.031)"/>
<rect x="105.00" y="156.67" width="1.00" height="15.73" fill="rgba(255,255,255,0.038)"/>
<rect x="265.00" y="142.16" width="3.00" height="5.85" fill="rgba(0,0,0,0.070)"/>
<rect x="81.00" y="158.90" width="2.00" height="8.14" fill="rgba(0,0,0,0.079)"/>
<rect x="253.00" y="169.41" width="1.00" height="19.86" fill="rgba(255,255,255,0.085)"/>
<rect x="174.00" y="141.82" width="2.00" height="14.32" fill="rgba(0,0,0,0.028)"/>
<rect x="161.00" y="144.42" width="1.00" height="21.32" fill="rgba(0,0,0,0.025)"/>
<rect x="295.00" y="156.45" width="3.00" height="5.45" fill="rgba(0,0,0,0.069)"/>
<rect x="166.00" y="165.86" width="2.00" height="20.04" fill="rgba(255,255,255,0.046)"/>
<rect x="263.00" y="157.40" width="1.00" height="21.66" fill="rgba(0,0,0,0.048)"/>
<rect x="132.00" y="156.69" width="2.00" height="15.50" fill="rgba(0,0,0,0.030)"/>
<rect x="141.00" y="170.74" width="1.00" height="19.85" fill="rgba(255,255,255,0.079)"/>
<rect x="81.00" y="155.48" width="3.00" height="16.51" fill="rgba(0,0,0,0.033)"/>
<rect x="61.00" y="143.27" width="1.00" height="21.06" fill="rgba(0,0,0,0.058)"/>
<rect x="335.00" y="158.09" width="1.00" height="6.51" fill="rgba(255,255,255,0.068)"/>
<rect x="208.00" y="162.00" width="3.00" height="15.25" fill="rgba(255,255,255,0.057)"/>
<rect x="111.00" y="152.10" width="2.00" height="12.30" fill="rgba(255,255,255,0.058)"/>
<rect x="61.00" y="165.06" width="1.00" height="22.39" fill="rgba(0,0,0,0.036)"/>
<rect x="96.00" y="145.71" width="1.00" height="17.86" fill="rgba(0,0,0,0.052)"/>
<rect x="232.00" y="163.53" width="3.00" height="22.64" fill="rgba(255,255,255,0.047)"/>
<rect x="141.00" y="158.34" width="3.00" height="21.57" fill="rgba(0,0,0,0.031)"/>
<rect x="161.00" y="146.37" width="1.00" height="23.48" fill="rgba(0,0,0,0.032)"/>
<rect x="147.00" y="138.38" width="3.00" height="21.31" fill="rgba(255,255,255,0.079)"/>
<rect x="323.00" y="164.57" width="1.00" height="19.77" fill="rgba(0,0,0,0.070)"/>
<rect x="208.00" y="161.21" width="3.00" height="21.91" fill="rgba(255,255,255,0.067)"/>
<rect x="311.00" y="171.46" width="3.00" height="14.65" fill="rgba(0,0,0,0.066)"/>
<rect x="52.00" y="164.72" width="2.00" height="23.80" fill="rgba(0,0,0,0.039)"/>
<rect x="217.00" y="171.44" width="1.00" height="13.10" fill="rgba(0,0,0,0.058)"/>
<rect x="185.00" y="167.80" width="1.00" height="12.16" fill="rgba(255,255,255,0.035)"/>
<rect x="181.00" y="167.38" width="2.00" height="18.19" fill="rgba(255,255,255,0.054)"/>
<rect x="333.00" y="147.08" width="1.00" height="11.48" fill="rgba(0,0,0,0.057)"/>
<rect x="279.00" y="169.77" width="3.00" height="15.61" fill="rgba(255,255,255,0.079)"/>
<rect x="117.00" y="158.04" width="1.00" height="5.40" fill="rgba(255,255,255,0.035)"/>
<rect x="267.00" y="147.17" width="2.00" height="16.79" fill="rgba(0,0,0,0.087)"/>
<rect x="189.00" y="160.32" width="1.00" height="6.77" fill="rgba(0,0,0,0.076)"/>
<rect x="235.00" y="142.89" width="1.00" height="11.77" fill="rgba(255,255,255,0.053)"/>
<rect x="199.00" y="159.70" width="2.00" height="14.86" fill="rgba(255,255,255,0.033)"/>
<rect x="66.00" y="150.95" width="1.00" height="22.42" fill="rgba(255,255,255,0.025)"/>
<rect x="96.00" y="167.89" width="1.00" height="16.09" fill="rgba(255,255,255,0.059)"/>
<rect x="314.00" y="148.75" width="2.00" height="14.04" fill="rgba(0,0,0,0.023)"/>
<rect x="123.00" y="139.76" width="2.00" height="8.78" fill="rgba(255,255,255,0.046)"/>
<rect x="184.00" y="138.81" width="1.00" height="9.00" fill="rgba(0,0,0,0.081)"/>
<rect x="344.00" y="143.40" width="1.00" height="8.79" fill="rgba(0,0,0,0.081)"/>
<rect x="335.00" y="170.45" width="2.00" height="6.65" fill="rgba(255,255,255,0.053)"/>
<rect x="221.00" y="137.97" width="2.00" height="22.97" fill="rgba(255,255,255,0.077)"/>
<rect x="176.00" y="171.47" width="3.00" height="17.53" fill="rgba(0,0,0,0.023)"/>
<rect x="74.00" y="161.26" width="2.00" height="20.84" fill="rgba(255,255,255,0.084)"/>
<rect x="45.00" y="152.37" width="1.00" height="24.24" fill="rgba(0,0,0,0.024)"/>
<rect x="276.00" y="150.49" width="3.00" height="8.67" fill="rgba(255,255,255,0.041)"/>
<rect x="79.00" y="154.30" width="1.00" height="18.09" fill="rgba(0,0,0,0.086)"/>
<rect x="270.00" y="163.46" width="1.00" height="9.34" fill="rgba(255,255,255,0.060)"/>
<rect x="262.00" y="149.77" width="3.00" height="17.09" fill="rgba(255,255,255,0.085)"/>
<rect x="319.00" y="145.74" width="2.00" height="23.49" fill="rgba(255,255,255,0.020)"/>
<rect x="104.00" y="155.03" width="2.00" height="15.24" fill="rgba(255,255,255,0.063)"/>
<rect x="146.00" y="158.55" width="1.00" height="10.09" fill="rgba(0,0,0,0.026)"/>
<rect x="214.00" y="150.02" width="3.00" height="7.64" fill="rgba(255,255,255,0.075)"/>
<rect x="288.00" y="141.63" width="2.00" height="13.31" fill="rgba(255,255,255,0.081)"/>
<rect x="242.00" y="137.30" width="1.00" height="10.32" fill="rgba(255,255,255,0.087)"/>
<rect x="73.00" y="163.71" width="1.00" height="22.90" fill="rgba(255,255,255,0.070)"/>
<rect x="78.00" y="150.13" width="1.00" height="12.22" fill="rgba(255,255,255,0.035)"/>
<rect x="116.00" y="160.79" width="1.00" height="5.21" fill="rgba(0,0,0,0.088)"/>
<rect x="48.00" y="148.56" width="3.00" height="17.00" fill="rgba(255,255,255,0.023)"/>
<rect x="287.00" y="166.53" width="2.00" height="5.74" fill="rgba(0,0,0,0.087)"/>
<rect x="194.00" y="143.31" width="2.00" height="9.61" fill="rgba(255,255,255,0.026)"/>
<rect x="125.00" y="153.47" width="3.00" height="15.51" fill="rgba(255,255,255,0.062)"/>
<rect x="54.00" y="165.66" width="3.00" height="16.10" fill="rgba(255,255,255,0.045)"/>
<rect x="338.00" y="152.29" width="2.00" height="8.35" fill="rgba(255,255,255,0.024)"/>
<rect x="279.00" y="170.40" width="2.00" height="10.55" fill="rgba(0,0,0,0.034)"/>
<rect x="128.00" y="135.66" width="1.00" height="8.73" fill="rgba(255,255,255,0.085)"/>
<rect x="292.00" y="139.91" width="1.00" height="18.46" fill="rgba(255,255,255,0.078)"/>
<rect x="88.00" y="170.48" width="1.00" height="14.63" fill="rgba(255,255,255,0.021)"/>
<rect x="51.00" y="168.26" width="3.00" height="16.88" fill="rgba(255,255,255,0.089)"/>
<rect x="79.00" y="151.81" width="3.00" height="16.36" fill="rgba(0,0,0,0.076)"/>
<rect x="268.00" y="149.38" width="3.00" height="24.06" fill="rgba(255,255,255,0.049)"/>
<rect x="244.00" y="141.50" width="3.00" height="15.94" fill="rgba(255,255,255,0.080)"/>
<rect x="123.00" y="166.50" width="2.00" height="15.35" fill="rgba(255,255,255,0.066)"/>
<rect x="82.00" y="158.27" width="1.00" height="10.71" fill="rgba(0,0,0,0.073)"/>
<rect x="315.00" y="170.75" width="3.00" height="12.12" fill="rgba(255,255,255,0.032)"/>
<rect x="319.00" y="145.88" width="3.00" height="14.41" fill="rgba(0,0,0,0.035)"/>
<rect x="146.00" y="162.69" width="3.00" height="7.80" fill="rgba(255,255,255,0.026)"/>
<rect x="334.00" y="164.62" width="1.00" height="5.43" fill="rgba(255,255,255,0.055)"/>
<rect x="145.00" y="161.05" width="3.00" height="21.56" fill="rgba(0,0,0,0.026)"/>
<rect x="134.00" y="136.72" width="2.00" height="20.79" fill="rgba(255,255,255,0.070)"/>
<rect x="106.00" y="140.70" width="1.00" height="24.29" fill="rgba(0,0,0,0.059)"/>
<rect x="299.00" y="146.71" width="3.00" height="7.46" fill="rgba(0,0,0,0.052)"/>
<rect x="87.00" y="135.65" width="1.00" height="18.15" fill="rgba(255,255,255,0.082)"/>
<rect x="136.00" y="149.21" width="2.00" height="19.41" fill="rgba(255,255,255,0.088)"/>
<rect x="159.00" y="151.09" width="2.00" height="11.34" fill="rgba(0,0,0,0.055)"/>
<rect x="173.00" y="136.05" width="2.00" height="6.75" fill="rgba(0,0,0,0.081)"/>
<rect x="170.00" y="158.26" width="3.00" height="8.41" fill="rgba(255,255,255,0.031)"/>
<rect x="229.00" y="142.46" width="3.00" height="5.20" fill="rgba(255,255,255,0.080)"/>
<rect x="101.00" y="157.93" width="1.00" height="11.59" fill="rgba(0,0,0,0.034)"/>
<rect x="221.00" y="157.94" width="2.00" height="20.42" fill="rgba(255,255,255,0.075)"/>
<rect x="251.00" y="166.56" width="1.00" height="12.62" fill="rgba(255,255,255,0.045)"/>
<rect x="62.00" y="137.28" width="2.00" height="16.77" fill="rgba(0,0,0,0.072)"/>
<rect x="305.00" y="147.65" width="1.00" height="15.10" fill="rgba(0,0,0,0.081)"/>
<rect x="256.00" y="160.28" width="2.00" height="10.00" fill="rgba(0,0,0,0.022)"/>
<rect x="281.00" y="169.83" width="3.00" height="6.48" fill="rgba(0,0,0,0.061)"/>
<rect x="69.00" y="154.75" width="2.00" height="14.96" fill="rgba(0,0,0,0.073)"/>
<rect x="269.00" y="160.81" width="1.00" height="21.63" fill="rgba(255,255,255,0.035)"/>
<rect x="142.00" y="138.30" width="1.00" height="23.77" fill="rgba(0,0,0,0.033)"/>
<rect x="169.00" y="169.82" width="1.00" height="18.94" fill="rgba(255,255,255,0.034)"/>
<ellipse cx="155" cy="160" rx="5" ry="10" fill="rgba(0,0,0,0.16)"/>
<ellipse cx="110" cy="160" rx="6" ry="9" fill="rgba(0,0,0,0.1)"/>
<ellipse cx="72" cy="155" rx="5" ry="10" fill="rgba(0,0,0,0.06)"/>
<ellipse cx="245" cy="158" rx="6" ry="12" fill="rgba(0,0,0,0.06)"/>
<ellipse cx="190" cy="170" rx="14" ry="6" fill="rgba(255,255,255,0.25)"/>
<ellipse cx="300" cy="168" rx="45" ry="8" fill="rgba(255,255,255,0.22)"/>
<ellipse cx="60" cy="172" rx="10" ry="4" fill="rgba(255,255,255,0.12)"/>
</g>
<defs><linearGradient id="gclh" x1="0" y1="0" x2="1" y2="0"><stop offset="0" stop-color="rgba(255,255,255,0)"/><stop offset="0.45" stop-color="rgba(255,255,255,0.02)"/><stop offset="0.6" stop-color="rgba(255,255,255,0.12)"/><stop offset="1" stop-color="rgba(255,255,255,0.16)"/></linearGradient></defs>
<rect x="45.00" y="130.00" width="302.00" height="45.50" fill="url(#gclh)"/>
<polygon points="45,120 45,139.3 49,139.3 49,139.3 52,139.3 52,139.4 55,139.4 55,139.9 59,139.9 59,139.0 65,139.0 65,139.5 68,139.5 68,140.6 74,140.6 74,139.6 80,139.6 80,139.7 84,139.7 84,139.7 89,139.7 89,139.3 92,139.3 92,139.8 97,139.8 97,139.9 101,139.9 101,139.6 103,139.6 103,139.1 109,139.1 109,137.9 115,137.9 115,136.8 118,136.8 118,136.9 121,136.9 121,137.0 123,137.0 123,137.7 129,137.7 129,138.4 135,138.4 135,137.8 141,137.8 141,139.0 143,139.0 143,139.1 146,139.1 146,138.2 150,138.2 150,137.9 152,137.9 152,138.4 157,138.4 157,138.6 163,138.6 163,139.4 167,139.4 167,139.0 173,139.0 173,138.7 177,138.7 177,140.0 179,140.0 179,139.3 185,139.3 185,140.4 191,140.4 191,140.5 194,140.5 194,141.7 199,141.7 199,141.9 202,141.9 202,141.5 204,141.5 204,142.1 206,142.1 206,142.7 208,142.7 208,142.3 212,142.3 212,142.0 214,142.0 214,141.5 220,141.5 220,142.3 225,142.3 225,143.3 230,143.3 230,142.4 232,142.4 232,141.9 236,141.9 236,142.4 238,142.4 238,142.4 243,142.4 243,141.9 248,141.9 248,142.4 250,142.4 250,142.4 255,142.4 255,143.5 257,143.5 257,142.5 259,142.5 259,143.5 261,143.5 261,142.5 266,142.5 266,143.1 271,143.1 271,142.6 273,142.6 273,142.7 276,142.7 276,142.7 279,142.7 279,142.7 282,142.7 282,142.8 285,142.8 285,142.8 287,142.8 287,143.3 293,143.3 293,143.9 299,143.9 299,143.5 305,143.5 305,142.7 310,142.7 310,142.8 314,142.8 314,143.9 316,143.9 316,144.0 322,144.0 322,143.2 326,143.2 326,143.8 330,143.8 330,144.0 335,144.0 335,143.6 337,143.6 337,144.2 342,144.2 342,144.3 344,144.3 344,144.4 347,144.4 347,120" fill="#000"/>
<rect x="45.00" y="172.50" width="2.00" height="1.20" fill="#101010"/>
<rect x="55.00" y="172.50" width="2.00" height="1.20" fill="#101010"/>
<rect x="100.00" y="172.50" width="6.00" height="1.20" fill="#101010"/>
<rect x="108.00" y="172.50" width="6.00" height="1.20" fill="#101010"/>
<rect x="116.00" y="172.50" width="8.00" height="1.20" fill="#101010"/>
<rect x="125.00" y="172.50" width="5.00" height="1.20" fill="#101010"/>
<rect x="145.00" y="172.50" width="18.00" height="1.20" fill="#101010"/>
<rect x="165.00" y="172.50" width="5.00" height="1.20" fill="#101010"/>
<rect x="100.00" y="174.00" width="1.50" height="2.00" fill="#101010"/>
<rect x="45.00" y="178.20" width="189.00" height="1.30" fill="#40c040"/>
<rect x="45.50" y="115.90" width="7.10" height="1.50" fill="#d42a2a"/>
<rect x="52.00" y="116.90" width="3.00" height="1.50" fill="#d42a2a"/>
<rect x="54.60" y="120.00" width="3.50" height="1.50" fill="#d42a2a"/>
<rect x="57.10" y="117.90" width="3.00" height="1.50" fill="#d42a2a"/>
<rect x="60.10" y="120.00" width="3.10" height="1.50" fill="#d42a2a"/>
<rect x="62.10" y="114.60" width="3.10" height="1.50" fill="#d42a2a"/>
<rect x="65.20" y="118.70" width="3.00" height="1.50" fill="#d42a2a"/>
<rect x="67.00" y="113.60" width="3.20" height="1.50" fill="#d42a2a"/>
<rect x="69.70" y="118.70" width="3.50" height="1.50" fill="#d42a2a"/>
<rect x="71.70" y="116.60" width="3.50" height="1.50" fill="#d42a2a"/>
<rect x="74.70" y="110.60" width="3.60" height="1.50" fill="#d42a2a"/>
<rect x="76.80" y="115.90" width="3.00" height="1.50" fill="#d42a2a"/>
<rect x="79.80" y="117.90" width="3.50" height="1.50" fill="#d42a2a"/>
<rect x="81.80" y="113.60" width="3.50" height="1.50" fill="#d42a2a"/>
<rect x="84.80" y="115.90" width="3.60" height="1.50" fill="#d42a2a"/>
<rect x="86.80" y="113.60" width="3.60" height="1.50" fill="#d42a2a"/>
<rect x="89.90" y="110.60" width="3.50" height="1.50" fill="#d42a2a"/>
<rect x="91.90" y="115.90" width="3.00" height="1.50" fill="#d42a2a"/>
<rect x="94.90" y="116.90" width="3.50" height="1.50" fill="#d42a2a"/>
<rect x="96.90" y="110.60" width="3.60" height="1.50" fill="#d42a2a"/>
<rect x="100.00" y="109.60" width="3.50" height="1.50" fill="#d42a2a"/>
<rect x="102.00" y="108.60" width="3.50" height="1.50" fill="#d42a2a"/>
<rect x="105.00" y="116.60" width="3.50" height="1.50" fill="#d42a2a"/>
<rect x="107.00" y="115.60" width="3.00" height="1.50" fill="#d42a2a"/>
<rect x="110.00" y="118.70" width="3.60" height="1.50" fill="#d42a2a"/>
<rect x="112.00" y="115.60" width="3.00" height="1.50" fill="#d42a2a"/>
<rect x="114.60" y="110.60" width="3.40" height="1.50" fill="#d42a2a"/>
<rect x="116.60" y="118.70" width="3.50" height="1.50" fill="#d42a2a"/>
<rect x="120.10" y="116.60" width="3.50" height="1.50" fill="#d42a2a"/>
<rect x="122.60" y="115.60" width="3.60" height="1.50" fill="#d42a2a"/>
<rect x="125.10" y="113.60" width="3.10" height="1.50" fill="#d42a2a"/>
<rect x="127.70" y="115.60" width="3.50" height="1.50" fill="#d42a2a"/>
<rect x="130.20" y="113.60" width="5.50" height="1.50" fill="#d42a2a"/>
<rect x="134.20" y="105.90" width="4.10" height="1.50" fill="#d42a2a"/>
<rect x="137.20" y="120.00" width="3.60" height="1.50" fill="#d42a2a"/>
<rect x="139.80" y="117.90" width="3.00" height="1.50" fill="#d42a2a"/>
<rect x="142.50" y="106.60" width="3.50" height="1.50" fill="#d42a2a"/>
<rect x="144.50" y="111.90" width="3.50" height="1.50" fill="#d42a2a"/>
<rect x="147.60" y="114.90" width="3.50" height="1.50" fill="#d42a2a"/>
<rect x="150.00" y="111.90" width="3.10" height="1.50" fill="#d42a2a"/>
<rect x="152.60" y="113.90" width="3.50" height="1.50" fill="#d42a2a"/>
<rect x="155.10" y="114.90" width="3.00" height="1.50" fill="#d42a2a"/>
<rect x="157.60" y="110.60" width="3.60" height="1.50" fill="#d42a2a"/>
<rect x="159.70" y="113.90" width="3.50" height="1.50" fill="#d42a2a"/>
<rect x="162.70" y="110.60" width="3.50" height="1.50" fill="#d42a2a"/>
<rect x="164.70" y="113.90" width="3.50" height="1.50" fill="#d42a2a"/>
<rect x="167.70" y="112.60" width="3.60" height="1.50" fill="#d42a2a"/>
<rect x="169.70" y="117.90" width="3.60" height="1.50" fill="#d42a2a"/>
<rect x="172.80" y="112.60" width="5.00" height="1.50" fill="#d42a2a"/>
<rect x="177.80" y="115.90" width="3.50" height="1.50" fill="#d42a2a"/>
<rect x="179.80" y="112.60" width="3.50" height="1.50" fill="#d42a2a"/>
<rect x="182.80" y="120.70" width="3.60" height="1.50" fill="#d42a2a"/>
<rect x="184.90" y="116.90" width="3.50" height="1.50" fill="#d42a2a"/>
<rect x="187.90" y="113.90" width="11.10" height="1.50" fill="#d42a2a"/>
<rect x="198.00" y="110.60" width="3.50" height="1.50" fill="#d42a2a"/>
<rect x="200.50" y="109.60" width="3.50" height="1.50" fill="#d42a2a"/>
<rect x="203.00" y="112.60" width="3.00" height="1.50" fill="#d42a2a"/>
<rect x="205.50" y="110.60" width="4.10" height="1.50" fill="#d42a2a"/>
<rect x="208.00" y="113.90" width="3.00" height="1.50" fill="#d42a2a"/>
<rect x="210.00" y="115.90" width="4.10" height="1.50" fill="#d42a2a"/>
<rect x="213.10" y="112.60" width="3.00" height="1.50" fill="#d42a2a"/>
<rect x="216.10" y="110.60" width="5.60" height="1.50" fill="#d42a2a"/>
<rect x="220.60" y="114.90" width="13.70" height="1.50" fill="#d42a2a"/>
<rect x="72.00" y="57.00" width="2.00" height="1.00" fill="#2a2a2a"/>
<rect x="255.00" y="41.00" width="2.00" height="1.00" fill="#2a2a2a"/>
<rect x="270.00" y="64.00" width="2.00" height="1.00" fill="#2a2a2a"/>
<rect x="280.00" y="105.00" width="2.00" height="1.00" fill="#2a2a2a"/>
<rect x="315.00" y="87.00" width="2.00" height="1.00" fill="#2a2a2a"/>
<rect x="333.00" y="79.00" width="2.00" height="1.00" fill="#2a2a2a"/>
<rect x="200.00" y="75.00" width="2.00" height="1.00" fill="#2a2a2a"/>
<rect x="150.00" y="102.00" width="2.00" height="1.00" fill="#2a2a2a"/>
<rect x="90.00" y="45.00" width="2.00" height="1.00" fill="#2a2a2a"/>
<rect x="40.00" y="164.80" width="5.00" height="1.20" fill="#000"/>
<text x="39.0" y="168.4" font-size="8.4" text-anchor="end" fill="#000" stroke="#000" stroke-width="0.22">2</text>
<rect x="40.00" y="152.80" width="5.00" height="1.20" fill="#000"/>
<text x="39.0" y="156.4" font-size="8.4" text-anchor="end" fill="#000" stroke="#000" stroke-width="0.22">4</text>
<rect x="40.00" y="140.80" width="5.00" height="1.20" fill="#000"/>
<text x="39.0" y="144.4" font-size="8.4" text-anchor="end" fill="#000" stroke="#000" stroke-width="0.22">6</text>
<rect x="40.00" y="128.80" width="5.00" height="1.20" fill="#000"/>
<text x="39.0" y="132.4" font-size="8.4" text-anchor="end" fill="#000" stroke="#000" stroke-width="0.22">8</text>
<rect x="40.00" y="116.80" width="5.00" height="1.20" fill="#000"/>
<text x="39.0" y="120.4" font-size="8.4" text-anchor="end" fill="#000" stroke="#000" stroke-width="0.22">10</text>
<rect x="40.00" y="104.80" width="5.00" height="1.20" fill="#000"/>
<text x="39.0" y="108.4" font-size="8.4" text-anchor="end" fill="#000" stroke="#000" stroke-width="0.22">12</text>
<rect x="40.00" y="92.80" width="5.00" height="1.20" fill="#000"/>
<text x="39.0" y="96.4" font-size="8.4" text-anchor="end" fill="#000" stroke="#000" stroke-width="0.22">14</text>
<rect x="40.00" y="80.80" width="5.00" height="1.20" fill="#000"/>
<text x="39.0" y="84.4" font-size="8.4" text-anchor="end" fill="#000" stroke="#000" stroke-width="0.22">16</text>
<rect x="40.00" y="68.80" width="5.00" height="1.20" fill="#000"/>
<text x="39.0" y="72.4" font-size="8.4" text-anchor="end" fill="#000" stroke="#000" stroke-width="0.22">18</text>
<rect x="40.00" y="56.80" width="5.00" height="1.20" fill="#000"/>
<text x="39.0" y="60.4" font-size="8.4" text-anchor="end" fill="#000" stroke="#000" stroke-width="0.22">20</text>
<rect x="40.00" y="44.80" width="5.00" height="1.20" fill="#000"/>
<text x="39.0" y="48.4" font-size="8.4" text-anchor="end" fill="#000" stroke="#000" stroke-width="0.22">22</text>
<rect x="40.00" y="32.80" width="5.00" height="1.20" fill="#000"/>
<text x="39.0" y="36.4" font-size="8.4" text-anchor="end" fill="#000" stroke="#000" stroke-width="0.22">24</text>
<rect x="40.00" y="22.60" width="5.00" height="1.20" fill="#000"/>
<text x="39.0" y="26.2" font-size="8.4" text-anchor="end" fill="#000" stroke="#000" stroke-width="0.22">26</text>
<rect x="40.00" y="175.00" width="5.00" height="1.20" fill="#000"/>
<text x="38.5" y="175.0" font-size="8.4" text-anchor="end" fill="#000" stroke="#000" stroke-width="0.22">0</text>
<rect x="45.00" y="183.00" width="1.30" height="10.00" fill="#000"/>
<text x="40.4" y="202.8" font-size="8.6" text-anchor="start" fill="#000" stroke="#000" stroke-width="0.22" textLength="22.8" lengthAdjust="spacingAndGlyphs">21:40</text>
<rect x="70.17" y="183.00" width="1.30" height="5.50" fill="#000"/>
<rect x="95.33" y="183.00" width="1.30" height="10.00" fill="#000"/>
<text x="90.7" y="202.8" font-size="8.6" text-anchor="start" fill="#000" stroke="#000" stroke-width="0.22" textLength="22.8" lengthAdjust="spacingAndGlyphs">22:00</text>
<rect x="120.50" y="183.00" width="1.30" height="5.50" fill="#000"/>
<rect x="145.67" y="183.00" width="1.30" height="10.00" fill="#000"/>
<text x="141.1" y="202.8" font-size="8.6" text-anchor="start" fill="#000" stroke="#000" stroke-width="0.22" textLength="22.8" lengthAdjust="spacingAndGlyphs">22:20</text>
<rect x="170.83" y="183.00" width="1.30" height="5.50" fill="#000"/>
<rect x="196.00" y="183.00" width="1.30" height="10.00" fill="#000"/>
<text x="191.4" y="202.8" font-size="8.6" text-anchor="start" fill="#000" stroke="#000" stroke-width="0.22" textLength="22.8" lengthAdjust="spacingAndGlyphs">22:40</text>
<rect x="221.17" y="183.00" width="1.30" height="5.50" fill="#000"/>
<rect x="246.33" y="183.00" width="1.30" height="10.00" fill="#000"/>
<text x="241.7" y="202.8" font-size="8.6" text-anchor="start" fill="#000" stroke="#000" stroke-width="0.22" textLength="22.8" lengthAdjust="spacingAndGlyphs">23:00</text>
<rect x="271.50" y="183.00" width="1.30" height="5.50" fill="#000"/>
<rect x="296.67" y="183.00" width="1.30" height="10.00" fill="#000"/>
<text x="292.1" y="202.8" font-size="8.6" text-anchor="start" fill="#000" stroke="#000" stroke-width="0.22" textLength="22.8" lengthAdjust="spacingAndGlyphs">23:20</text>
<rect x="321.83" y="183.00" width="1.30" height="5.50" fill="#000"/>
<rect x="346.00" y="183.00" width="1.30" height="10.00" fill="#000"/>
<text x="341.4" y="202.8" font-size="8.6" text-anchor="start" fill="#000" stroke="#000" stroke-width="0.22" textLength="22.8" lengthAdjust="spacingAndGlyphs">23:40</text>
<defs><linearGradient id="gref" x1="0" y1="0" x2="0" y2="1"><stop offset="0" stop-color="#f4f4f4"/><stop offset="0.3" stop-color="#c8c8c8"/><stop offset="0.6" stop-color="#707070"/><stop offset="0.85" stop-color="#303030"/><stop offset="1" stop-color="#080808"/></linearGradient></defs>
<rect x="350.00" y="21.00" width="6.50" height="166.00" fill="url(#gref)"/>
<rect x="357.00" y="175.40" width="6.50" height="1.20" fill="#000"/>
<text x="363.6" y="175.0" font-size="8.4" text-anchor="start" fill="#000" stroke="#000" stroke-width="0.22">0</text>
<rect x="357.00" y="163.50" width="6.50" height="1.20" fill="#000"/>
<text x="363.6" y="167.1" font-size="8.4" text-anchor="start" fill="#000" stroke="#000" stroke-width="0.22">10</text>
<rect x="357.00" y="151.60" width="6.50" height="1.20" fill="#000"/>
<text x="363.6" y="155.2" font-size="8.4" text-anchor="start" fill="#000" stroke="#000" stroke-width="0.22">20</text>
<rect x="357.00" y="139.70" width="6.50" height="1.20" fill="#000"/>
<text x="363.6" y="143.3" font-size="8.4" text-anchor="start" fill="#000" stroke="#000" stroke-width="0.22">30</text>
<rect x="357.00" y="127.80" width="6.50" height="1.20" fill="#000"/>
<text x="363.6" y="131.4" font-size="8.4" text-anchor="start" fill="#000" stroke="#000" stroke-width="0.22">40</text>
<rect x="357.00" y="115.90" width="6.50" height="1.20" fill="#000"/>
<text x="363.6" y="119.5" font-size="8.4" text-anchor="start" fill="#000" stroke="#000" stroke-width="0.22">50</text>
<rect x="357.00" y="104.00" width="6.50" height="1.20" fill="#000"/>
<text x="363.6" y="107.6" font-size="8.4" text-anchor="start" fill="#000" stroke="#000" stroke-width="0.22">60</text>
<rect x="357.00" y="92.10" width="6.50" height="1.20" fill="#000"/>
<text x="363.6" y="95.7" font-size="8.4" text-anchor="start" fill="#000" stroke="#000" stroke-width="0.22">70</text>
<rect x="357.00" y="80.20" width="6.50" height="1.20" fill="#000"/>
<text x="363.6" y="83.8" font-size="8.4" text-anchor="start" fill="#000" stroke="#000" stroke-width="0.22">80</text>
<rect x="357.00" y="68.30" width="6.50" height="1.20" fill="#000"/>
<text x="363.6" y="71.9" font-size="8.4" text-anchor="start" fill="#000" stroke="#000" stroke-width="0.22">90</text>
<rect x="357.00" y="56.40" width="6.50" height="1.20" fill="#000"/>
<text x="363.6" y="60.0" font-size="8.4" text-anchor="start" fill="#000" stroke="#000" stroke-width="0.22">100</text>
<rect x="357.00" y="44.50" width="6.50" height="1.20" fill="#000"/>
<text x="363.6" y="48.1" font-size="8.4" text-anchor="start" fill="#000" stroke="#000" stroke-width="0.22">110</text>
<rect x="357.00" y="32.60" width="6.50" height="1.20" fill="#000"/>
<text x="363.6" y="36.2" font-size="8.4" text-anchor="start" fill="#000" stroke="#000" stroke-width="0.22">120</text>
<rect x="357.00" y="22.70" width="6.50" height="1.20" fill="#000"/>
<text x="363.6" y="26.3" font-size="8.4" text-anchor="start" fill="#000" stroke="#000" stroke-width="0.22">130</text>
<text x="10.7" y="226.0" font-size="9.4" font-weight="bold" text-anchor="start" fill="#000" stroke="#000" stroke-width="0.1" textLength="62.2" lengthAdjust="spacingAndGlyphs">Instrument</text>
<text x="177.4" y="225.6" font-size="9.4" font-weight="bold" text-anchor="start" fill="#000" stroke="#000" stroke-width="0.1" textLength="36.3" lengthAdjust="spacingAndGlyphs">Status</text>
<text x="340.0" y="225.6" font-size="9.4" font-weight="bold" text-anchor="start" fill="#000" stroke="#000" stroke-width="0.1" textLength="41.8" lengthAdjust="spacingAndGlyphs">Current</text>
<rect x="45.00" y="227.00" width="303.00" height="1.00" fill="#ffffff"/>
<rect x="347.00" y="227.00" width="1.00" height="65.00" fill="#ffffff"/>
<rect x="45.00" y="228.00" width="302.00" height="64.00" fill="#000"/>
<rect x="45.00" y="231.00" width="302.00" height="8.00" fill="#00f000"/>
<text x="10.7" y="239.0" font-size="8.2" text-anchor="start" fill="#000" stroke="#000" stroke-width="0.22" textLength="27.3" lengthAdjust="spacingAndGlyphs">RADAR</text>
<circle cx="361.5" cy="235.5" r="4.2" fill="#10d010" stroke="#1a1a1a" stroke-width="1"/>
<rect x="45.00" y="245.00" width="302.00" height="8.00" fill="#f00000"/>
<text x="10.7" y="253.0" font-size="8.2" text-anchor="start" fill="#000" stroke="#000" stroke-width="0.22" textLength="27.3" lengthAdjust="spacingAndGlyphs">CLMTR</text>
<circle cx="361.5" cy="249.5" r="4.2" fill="#e01010" stroke="#1a1a1a" stroke-width="1"/>
<rect x="45.00" y="259.00" width="188.00" height="8.00" fill="#00f000"/>
<rect x="233.00" y="259.00" width="114.00" height="8.00" fill="#f00000"/>
<text x="10.7" y="267.0" font-size="8.2" text-anchor="start" fill="#000" stroke="#000" stroke-width="0.22" textLength="24.2" lengthAdjust="spacingAndGlyphs">RDMR</text>
<circle cx="361.5" cy="263.5" r="4.2" fill="#e01010" stroke="#1a1a1a" stroke-width="1"/>
<rect x="45.00" y="273.00" width="302.00" height="8.00" fill="#00f000"/>
<text x="10.7" y="281.0" font-size="8.2" text-anchor="start" fill="#000" stroke="#000" stroke-width="0.22" textLength="21.0" lengthAdjust="spacingAndGlyphs">DRY?</text>
<circle cx="361.5" cy="277.5" r="4.2" fill="#10d010" stroke="#1a1a1a" stroke-width="1"/>
<rect x="45.00" y="292.00" width="1.30" height="10.00" fill="#000"/>
<rect x="70.17" y="292.00" width="1.30" height="5.50" fill="#000"/>
<rect x="95.33" y="292.00" width="1.30" height="10.00" fill="#000"/>
<rect x="120.50" y="292.00" width="1.30" height="5.50" fill="#000"/>
<rect x="145.67" y="292.00" width="1.30" height="10.00" fill="#000"/>
<rect x="170.83" y="292.00" width="1.30" height="5.50" fill="#000"/>
<rect x="196.00" y="292.00" width="1.30" height="10.00" fill="#000"/>
<rect x="221.17" y="292.00" width="1.30" height="5.50" fill="#000"/>
<rect x="246.33" y="292.00" width="1.30" height="10.00" fill="#000"/>
<rect x="271.50" y="292.00" width="1.30" height="5.50" fill="#000"/>
<rect x="296.67" y="292.00" width="1.30" height="10.00" fill="#000"/>
<rect x="321.83" y="292.00" width="1.30" height="5.50" fill="#000"/>
<rect x="346.00" y="292.00" width="1.30" height="10.00" fill="#000"/>
<text x="10.5" y="314.8" font-size="9.4" text-anchor="start" fill="#000" stroke="#000" stroke-width="0.22" textLength="80.0" lengthAdjust="spacingAndGlyphs">Alt (1000ft MSL)</text>
<text x="162.6" y="314.6" font-size="9.4" font-weight="bold" text-anchor="start" fill="#000" stroke="#000" stroke-width="0.1" textLength="67.5" lengthAdjust="spacingAndGlyphs">Icing Hazard</text>
<text x="341.8" y="314.9" font-size="9.4" text-anchor="start" fill="#000" stroke="#000" stroke-width="0.22" textLength="40.1" lengthAdjust="spacingAndGlyphs">Severity</text>
<rect x="45.00" y="316.00" width="303.00" height="1.00" fill="#ffffff"/>
<rect x="347.00" y="316.00" width="1.00" height="163.00" fill="#ffffff"/>
<rect x="45.00" y="317.00" width="302.00" height="162.00" fill="#000"/>
<rect x="45.00" y="433.00" width="2.00" height="37.00" fill="#0a1ee8"/>
<rect x="47.00" y="436.00" width="2.00" height="34.00" fill="#0a1ee8"/>
<rect x="49.00" y="433.00" width="2.00" height="37.00" fill="#0a1ee8"/>
<rect x="51.00" y="433.00" width="2.00" height="37.00" fill="#0a1ee8"/>
<rect x="53.00" y="436.00" width="2.00" height="34.00" fill="#0a1ee8"/>
<rect x="55.00" y="436.00" width="2.00" height="34.00" fill="#0a1ee8"/>
<rect x="57.00" y="434.00" width="2.00" height="36.00" fill="#0a1ee8"/>
<rect x="59.00" y="434.00" width="2.00" height="36.00" fill="#0a1ee8"/>
<rect x="61.00" y="436.00" width="2.00" height="34.00" fill="#0a1ee8"/>
<rect x="63.00" y="433.00" width="2.00" height="37.00" fill="#0a1ee8"/>
<rect x="65.00" y="436.00" width="2.00" height="34.00" fill="#0a1ee8"/>
<rect x="67.00" y="434.00" width="2.00" height="36.00" fill="#0a1ee8"/>
<rect x="69.00" y="434.00" width="2.00" height="36.00" fill="#0a1ee8"/>
<rect x="71.00" y="433.00" width="2.00" height="37.00" fill="#0a1ee8"/>
<rect x="73.00" y="435.00" width="2.00" height="35.00" fill="#0a1ee8"/>
<rect x="75.00" y="434.00" width="2.00" height="36.00" fill="#0a1ee8"/>
<rect x="77.00" y="434.00" width="2.00" height="36.00" fill="#0a1ee8"/>
<rect x="79.00" y="436.00" width="2.00" height="34.00" fill="#0a1ee8"/>
<rect x="81.00" y="434.00" width="2.00" height="36.00" fill="#0a1ee8"/>
<rect x="83.00" y="436.00" width="2.00" height="34.00" fill="#0a1ee8"/>
<rect x="85.00" y="433.00" width="2.00" height="37.00" fill="#0a1ee8"/>
<rect x="87.00" y="433.00" width="2.00" height="37.00" fill="#0a1ee8"/>
<rect x="89.00" y="436.00" width="2.00" height="34.00" fill="#0a1ee8"/>
<rect x="91.00" y="434.00" width="2.00" height="36.00" fill="#0a1ee8"/>
<rect x="93.00" y="436.00" width="2.00" height="34.00" fill="#0a1ee8"/>
<rect x="95.00" y="434.00" width="2.00" height="36.00" fill="#0a1ee8"/>
<rect x="97.00" y="436.00" width="2.00" height="34.00" fill="#0a1ee8"/>
<rect x="99.00" y="434.00" width="2.00" height="36.00" fill="#0a1ee8"/>
<rect x="101.00" y="434.00" width="2.00" height="36.00" fill="#0a1ee8"/>
<rect x="103.00" y="434.00" width="2.00" height="36.00" fill="#0a1ee8"/>
<rect x="105.00" y="434.00" width="2.00" height="36.00" fill="#0a1ee8"/>
<rect x="107.00" y="434.00" width="2.00" height="36.00" fill="#0a1ee8"/>
<rect x="109.00" y="436.00" width="2.00" height="34.00" fill="#0a1ee8"/>
<rect x="111.00" y="434.00" width="2.00" height="36.00" fill="#0a1ee8"/>
<rect x="113.00" y="433.00" width="2.00" height="37.00" fill="#0a1ee8"/>
<rect x="115.00" y="435.00" width="2.00" height="35.00" fill="#0a1ee8"/>
<rect x="117.00" y="433.00" width="2.00" height="37.00" fill="#0a1ee8"/>
<rect x="119.00" y="436.00" width="2.00" height="34.00" fill="#0a1ee8"/>
<rect x="121.00" y="434.00" width="2.00" height="36.00" fill="#0a1ee8"/>
<rect x="123.00" y="436.00" width="2.00" height="34.00" fill="#0a1ee8"/>
<rect x="125.00" y="434.00" width="2.00" height="36.00" fill="#0a1ee8"/>
<rect x="127.00" y="435.00" width="2.00" height="35.00" fill="#0a1ee8"/>
<rect x="129.00" y="433.00" width="2.00" height="37.00" fill="#0a1ee8"/>
<rect x="131.00" y="434.00" width="2.00" height="36.00" fill="#0a1ee8"/>
<rect x="133.00" y="434.00" width="2.00" height="36.00" fill="#0a1ee8"/>
<rect x="135.00" y="433.00" width="2.00" height="37.00" fill="#0a1ee8"/>
<rect x="137.00" y="435.00" width="2.00" height="35.00" fill="#0a1ee8"/>
<rect x="139.00" y="433.00" width="2.00" height="37.00" fill="#0a1ee8"/>
<rect x="141.00" y="436.00" width="2.00" height="34.00" fill="#0a1ee8"/>
<rect x="143.00" y="434.00" width="2.00" height="36.00" fill="#0a1ee8"/>
<rect x="145.00" y="435.00" width="2.00" height="35.00" fill="#0a1ee8"/>
<rect x="147.00" y="435.00" width="2.00" height="35.00" fill="#0a1ee8"/>
<rect x="149.00" y="434.00" width="2.00" height="36.00" fill="#0a1ee8"/>
<rect x="151.00" y="436.00" width="2.00" height="34.00" fill="#0a1ee8"/>
<rect x="153.00" y="435.00" width="2.00" height="35.00" fill="#0a1ee8"/>
<rect x="155.00" y="434.00" width="2.00" height="36.00" fill="#0a1ee8"/>
<rect x="157.00" y="434.00" width="2.00" height="36.00" fill="#0a1ee8"/>
<rect x="159.00" y="436.00" width="2.00" height="34.00" fill="#0a1ee8"/>
<rect x="161.00" y="434.00" width="2.00" height="36.00" fill="#0a1ee8"/>
<rect x="163.00" y="433.00" width="2.00" height="37.00" fill="#0a1ee8"/>
<rect x="165.00" y="434.00" width="2.00" height="36.00" fill="#0a1ee8"/>
<rect x="167.00" y="435.00" width="2.00" height="35.00" fill="#0a1ee8"/>
<rect x="169.00" y="433.00" width="2.00" height="37.00" fill="#0a1ee8"/>
<rect x="171.00" y="434.00" width="2.00" height="36.00" fill="#0a1ee8"/>
<rect x="173.00" y="434.00" width="2.00" height="36.00" fill="#0a1ee8"/>
<rect x="175.00" y="434.00" width="2.00" height="36.00" fill="#0a1ee8"/>
<rect x="177.00" y="434.00" width="2.00" height="36.00" fill="#0a1ee8"/>
<rect x="179.00" y="434.00" width="2.00" height="36.00" fill="#0a1ee8"/>
<rect x="181.00" y="434.00" width="2.00" height="36.00" fill="#0a1ee8"/>
<rect x="183.00" y="433.00" width="2.00" height="37.00" fill="#0a1ee8"/>
<rect x="185.00" y="433.00" width="2.00" height="37.00" fill="#0a1ee8"/>
<rect x="187.00" y="433.00" width="2.00" height="37.00" fill="#0a1ee8"/>
<rect x="189.00" y="433.00" width="2.00" height="37.00" fill="#0a1ee8"/>
<rect x="191.00" y="434.00" width="2.00" height="36.00" fill="#0a1ee8"/>
<rect x="193.00" y="436.00" width="2.00" height="34.00" fill="#0a1ee8"/>
<rect x="195.00" y="434.00" width="2.00" height="36.00" fill="#0a1ee8"/>
<rect x="197.00" y="435.00" width="2.00" height="35.00" fill="#0a1ee8"/>
<rect x="199.00" y="435.00" width="2.00" height="35.00" fill="#0a1ee8"/>
<rect x="201.00" y="434.00" width="2.00" height="36.00" fill="#0a1ee8"/>
<rect x="203.00" y="435.00" width="2.00" height="35.00" fill="#0a1ee8"/>
<rect x="205.00" y="435.00" width="2.00" height="35.00" fill="#0a1ee8"/>
<rect x="207.00" y="434.00" width="2.00" height="36.00" fill="#0a1ee8"/>
<rect x="209.00" y="433.00" width="2.00" height="37.00" fill="#0a1ee8"/>
<rect x="211.00" y="434.00" width="2.00" height="36.00" fill="#0a1ee8"/>
<rect x="213.00" y="434.00" width="2.00" height="36.00" fill="#0a1ee8"/>
<rect x="215.00" y="434.00" width="2.00" height="36.00" fill="#0a1ee8"/>
<rect x="217.00" y="434.00" width="2.00" height="36.00" fill="#0a1ee8"/>
<rect x="219.00" y="434.00" width="2.00" height="36.00" fill="#0a1ee8"/>
<rect x="221.00" y="434.00" width="2.00" height="36.00" fill="#0a1ee8"/>
<rect x="223.00" y="433.00" width="2.00" height="37.00" fill="#0a1ee8"/>
<rect x="225.00" y="433.00" width="2.00" height="37.00" fill="#0a1ee8"/>
<rect x="227.00" y="434.00" width="2.00" height="36.00" fill="#0a1ee8"/>
<rect x="229.00" y="436.00" width="2.00" height="34.00" fill="#0a1ee8"/>
<rect x="231.00" y="434.00" width="2.00" height="36.00" fill="#0a1ee8"/>
<rect x="233.00" y="433.00" width="2.00" height="37.00" fill="#0a1ee8"/>
<rect x="45.00" y="441.00" width="1.50" height="29.00" fill="#8c8c8c"/>
<rect x="46.00" y="460.00" width="4.00" height="10.00" fill="#8c8c8c"/>
<rect x="47.00" y="463.00" width="3.00" height="4.00" fill="#0a1ee8"/>
<rect x="50.00" y="435.50" width="2.00" height="12.50" fill="#f0f000"/>
<rect x="50.00" y="448.00" width="2.00" height="13.50" fill="#10ee10"/>
<rect x="50.00" y="462.00" width="2.00" height="8.00" fill="#0a1ee8"/>
<rect x="51.00" y="466.00" width="1.00" height="2.00" fill="#40c8c8"/>
<rect x="52.00" y="462.00" width="5.00" height="8.00" fill="#8c8c8c"/>
<rect x="53.00" y="465.00" width="2.00" height="3.00" fill="#c4c4c4"/>
<rect x="57.00" y="434.00" width="3.40" height="3.00" fill="#10ee10"/>
<rect x="61.60" y="435.00" width="3.70" height="4.00" fill="#10ee10"/>
<rect x="65.00" y="437.00" width="2.00" height="33.00" fill="#8c8ce0"/>
<rect x="70.00" y="437.00" width="2.00" height="6.00" fill="#10ee10"/>
<rect x="72.00" y="434.50" width="3.00" height="1.50" fill="#10ee10"/>
<rect x="67.00" y="466.00" width="9.00" height="4.00" fill="#8c8c8c"/>
<rect x="77.00" y="440.00" width="3.00" height="30.00" fill="#8c8c8c"/>
<rect x="80.00" y="458.00" width="5.00" height="12.00" fill="#8c8c8c"/>
<rect x="85.00" y="455.00" width="5.00" height="15.00" fill="#8c8c8c"/>
<rect x="90.00" y="448.00" width="10.00" height="22.00" fill="#8c8c8c"/>
<rect x="82.00" y="464.00" width="4.00" height="3.00" fill="#c4c4c4"/>
<rect x="87.00" y="465.00" width="2.00" height="2.00" fill="#0a1ee8"/>
<rect x="92.00" y="457.00" width="4.00" height="12.00" fill="#c4c4c4"/>
<rect x="100.00" y="435.50" width="4.00" height="34.50" fill="#8c8c8c"/>
<rect x="99.70" y="457.00" width="4.30" height="12.00" fill="#c4c4c4"/>
<rect x="107.00" y="432.70" width="3.00" height="11.90" fill="#10ee10"/>
<rect x="104.00" y="455.60" width="6.00" height="14.40" fill="#8c8c8c"/>
<rect x="105.00" y="464.00" width="5.00" height="5.00" fill="#0a1ee8"/>
<rect x="110.00" y="453.00" width="5.00" height="17.00" fill="#8c8c8c"/>
<rect x="111.00" y="459.00" width="3.00" height="11.00" fill="#c4c4c4"/>
<rect x="115.00" y="432.00" width="5.00" height="17.50" fill="#10ee10"/>
<rect x="115.00" y="452.50" width="5.00" height="17.50" fill="#8c8c8c"/>
<rect x="116.00" y="461.00" width="3.00" height="7.00" fill="#c4c4c4"/>
<rect x="120.00" y="451.00" width="8.00" height="19.00" fill="#8c8c8c"/>
<rect x="122.00" y="458.00" width="4.00" height="8.00" fill="#c4c4c4"/>
<rect x="128.00" y="433.00" width="6.00" height="13.00" fill="#10ee10"/>
<rect x="128.00" y="461.50" width="6.00" height="8.50" fill="#8c8c8c"/>
<rect x="134.00" y="436.70" width="2.00" height="9.30" fill="#f0f000"/>
<rect x="134.00" y="446.00" width="4.00" height="9.60" fill="#10ee10"/>
<rect x="136.00" y="436.70" width="2.00" height="9.30" fill="#f0f000"/>
<rect x="138.00" y="433.00" width="2.00" height="23.00" fill="#10ee10"/>
<rect x="140.00" y="444.60" width="1.00" height="25.40" fill="#8c8c8c"/>
<rect x="141.00" y="453.00" width="4.00" height="17.00" fill="#8c8c8c"/>
<rect x="141.00" y="460.00" width="4.00" height="9.00" fill="#c4c4c4"/>
<rect x="145.00" y="435.00" width="3.00" height="35.00" fill="#8c8c8c"/>
<rect x="148.00" y="435.00" width="6.00" height="35.00" fill="#c4c4c4"/>
<rect x="149.00" y="444.60" width="3.00" height="3.10" fill="#8c8c8c"/>
<rect x="154.00" y="435.00" width="6.00" height="3.00" fill="#8c8c8c"/>
<rect x="155.00" y="438.00" width="3.00" height="9.00" fill="#0a1ee8"/>
<rect x="154.00" y="447.00" width="6.00" height="23.00" fill="#c4c4c4"/>
<rect x="155.00" y="448.00" width="3.00" height="7.00" fill="#8c8c8c"/>
<rect x="160.00" y="435.00" width="5.00" height="12.00" fill="#0a1ee8"/>
<rect x="160.00" y="447.00" width="5.00" height="12.00" fill="#8c8c8c"/>
<rect x="160.00" y="459.00" width="5.00" height="11.00" fill="#c4c4c4"/>
<rect x="165.00" y="433.00" width="9.00" height="15.00" fill="#10ee10"/>
<rect x="164.60" y="448.00" width="3.40" height="7.60" fill="#10ee10"/>
<rect x="173.00" y="435.00" width="2.00" height="6.00" fill="#f0f000"/>
<rect x="173.00" y="448.00" width="2.00" height="18.50" fill="#40c8c8"/>
<rect x="178.00" y="452.50" width="6.00" height="7.50" fill="#8c8c8c"/>
<rect x="182.00" y="453.00" width="4.00" height="17.00" fill="#8c8c8c"/>
<rect x="186.00" y="444.00" width="4.00" height="26.00" fill="#8c8c8c"/>
<rect x="190.00" y="437.30" width="8.00" height="32.70" fill="#8c8c8c"/>
<rect x="193.00" y="444.00" width="3.00" height="3.00" fill="#0a1ee8"/>
<rect x="198.00" y="451.00" width="8.00" height="19.00" fill="#8c8c8c"/>
<rect x="198.00" y="443.00" width="3.00" height="8.00" fill="#8c8c8c"/>
<rect x="188.00" y="457.00" width="13.00" height="9.50" fill="#c4c4c4"/>
<rect x="206.00" y="438.00" width="5.00" height="10.00" fill="#8c8c8c"/>
<rect x="206.00" y="448.00" width="5.00" height="21.00" fill="#c4c4c4"/>
<rect x="211.00" y="438.00" width="5.00" height="3.00" fill="#8c8c8c"/>
<rect x="211.00" y="441.00" width="5.00" height="28.00" fill="#c4c4c4"/>
<rect x="216.00" y="444.00" width="2.00" height="25.00" fill="#8c8c8c"/>
<rect x="218.00" y="437.00" width="4.00" height="1.50" fill="#40c8c8"/>
<rect x="222.00" y="447.00" width="12.00" height="16.50" fill="#8c8c8c"/>
<rect x="221.00" y="450.00" width="2.00" height="11.00" fill="#8c8c8c"/>
<rect x="182.00" y="469.00" width="3.00" height="1.00" fill="#40c8c8"/>
<rect x="188.00" y="469.00" width="5.00" height="1.00" fill="#40c8c8"/>
<rect x="222.00" y="469.00" width="12.00" height="1.00" fill="#40c8c8"/>
<rect x="175.00" y="469.00" width="9.00" height="1.00" fill="#40c8c8"/>
<rect x="137.00" y="469.00" width="3.00" height="1.00" fill="#40c8c8"/>
<rect x="40.00" y="460.80" width="5.00" height="1.20" fill="#000"/>
<text x="39.0" y="464.4" font-size="8.4" text-anchor="end" fill="#000" stroke="#000" stroke-width="0.22">2</text>
<rect x="40.00" y="448.80" width="5.00" height="1.20" fill="#000"/>
<text x="39.0" y="452.4" font-size="8.4" text-anchor="end" fill="#000" stroke="#000" stroke-width="0.22">4</text>
<rect x="40.00" y="436.80" width="5.00" height="1.20" fill="#000"/>
<text x="39.0" y="440.4" font-size="8.4" text-anchor="end" fill="#000" stroke="#000" stroke-width="0.22">6</text>
<rect x="40.00" y="424.80" width="5.00" height="1.20" fill="#000"/>
<text x="39.0" y="428.4" font-size="8.4" text-anchor="end" fill="#000" stroke="#000" stroke-width="0.22">8</text>
<rect x="40.00" y="412.80" width="5.00" height="1.20" fill="#000"/>
<text x="39.0" y="416.4" font-size="8.4" text-anchor="end" fill="#000" stroke="#000" stroke-width="0.22">10</text>
<rect x="40.00" y="400.80" width="5.00" height="1.20" fill="#000"/>
<text x="39.0" y="404.4" font-size="8.4" text-anchor="end" fill="#000" stroke="#000" stroke-width="0.22">12</text>
<rect x="40.00" y="388.80" width="5.00" height="1.20" fill="#000"/>
<text x="39.0" y="392.4" font-size="8.4" text-anchor="end" fill="#000" stroke="#000" stroke-width="0.22">14</text>
<rect x="40.00" y="376.80" width="5.00" height="1.20" fill="#000"/>
<text x="39.0" y="380.4" font-size="8.4" text-anchor="end" fill="#000" stroke="#000" stroke-width="0.22">16</text>
<rect x="40.00" y="364.80" width="5.00" height="1.20" fill="#000"/>
<text x="39.0" y="368.4" font-size="8.4" text-anchor="end" fill="#000" stroke="#000" stroke-width="0.22">18</text>
<rect x="40.00" y="352.80" width="5.00" height="1.20" fill="#000"/>
<text x="39.0" y="356.4" font-size="8.4" text-anchor="end" fill="#000" stroke="#000" stroke-width="0.22">20</text>
<rect x="40.00" y="340.80" width="5.00" height="1.20" fill="#000"/>
<text x="39.0" y="344.4" font-size="8.4" text-anchor="end" fill="#000" stroke="#000" stroke-width="0.22">22</text>
<rect x="40.00" y="328.80" width="5.00" height="1.20" fill="#000"/>
<text x="39.0" y="332.4" font-size="8.4" text-anchor="end" fill="#000" stroke="#000" stroke-width="0.22">24</text>
<rect x="40.00" y="318.60" width="5.00" height="1.20" fill="#000"/>
<text x="39.0" y="322.2" font-size="8.4" text-anchor="end" fill="#000" stroke="#000" stroke-width="0.22">26</text>
<rect x="40.00" y="471.00" width="5.00" height="1.20" fill="#000"/>
<text x="38.5" y="471.0" font-size="8.4" text-anchor="end" fill="#000" stroke="#000" stroke-width="0.22">0</text>
<rect x="45.00" y="479.00" width="1.30" height="10.00" fill="#000"/>
<text x="40.4" y="498.8" font-size="8.6" text-anchor="start" fill="#000" stroke="#000" stroke-width="0.22" textLength="22.8" lengthAdjust="spacingAndGlyphs">21:40</text>
<rect x="70.17" y="479.00" width="1.30" height="5.50" fill="#000"/>
<rect x="95.33" y="479.00" width="1.30" height="10.00" fill="#000"/>
<text x="90.7" y="498.8" font-size="8.6" text-anchor="start" fill="#000" stroke="#000" stroke-width="0.22" textLength="22.8" lengthAdjust="spacingAndGlyphs">22:00</text>
<rect x="120.50" y="479.00" width="1.30" height="5.50" fill="#000"/>
<rect x="145.67" y="479.00" width="1.30" height="10.00" fill="#000"/>
<text x="141.1" y="498.8" font-size="8.6" text-anchor="start" fill="#000" stroke="#000" stroke-width="0.22" textLength="22.8" lengthAdjust="spacingAndGlyphs">22:20</text>
<rect x="170.83" y="479.00" width="1.30" height="5.50" fill="#000"/>
<rect x="196.00" y="479.00" width="1.30" height="10.00" fill="#000"/>
<text x="191.4" y="498.8" font-size="8.6" text-anchor="start" fill="#000" stroke="#000" stroke-width="0.22" textLength="22.8" lengthAdjust="spacingAndGlyphs">22:40</text>
<rect x="221.17" y="479.00" width="1.30" height="5.50" fill="#000"/>
<rect x="246.33" y="479.00" width="1.30" height="10.00" fill="#000"/>
<text x="241.7" y="498.8" font-size="8.6" text-anchor="start" fill="#000" stroke="#000" stroke-width="0.22" textLength="22.8" lengthAdjust="spacingAndGlyphs">23:00</text>
<rect x="271.50" y="479.00" width="1.30" height="5.50" fill="#000"/>
<rect x="296.67" y="479.00" width="1.30" height="10.00" fill="#000"/>
<text x="292.1" y="498.8" font-size="8.6" text-anchor="start" fill="#000" stroke="#000" stroke-width="0.22" textLength="22.8" lengthAdjust="spacingAndGlyphs">23:20</text>
<rect x="321.83" y="479.00" width="1.30" height="5.50" fill="#000"/>
<rect x="346.00" y="479.00" width="1.30" height="10.00" fill="#000"/>
<text x="341.4" y="498.8" font-size="8.6" text-anchor="start" fill="#000" stroke="#000" stroke-width="0.22" textLength="22.8" lengthAdjust="spacingAndGlyphs">23:40</text>
<rect x="350.00" y="317.00" width="6.50" height="20.80" fill="#ff0000"/>
<rect x="350.00" y="337.75" width="6.50" height="20.80" fill="#ffaaaa"/>
<rect x="350.00" y="358.50" width="6.50" height="20.80" fill="#ffff00"/>
<rect x="350.00" y="379.25" width="6.50" height="20.80" fill="#00ee00"/>
<rect x="350.00" y="400.00" width="6.50" height="20.80" fill="#0000ff"/>
<rect x="350.00" y="420.75" width="6.50" height="20.80" fill="#888888"/>
<rect x="350.00" y="441.50" width="6.50" height="20.80" fill="#c8c8c8"/>
<rect x="350.00" y="462.25" width="6.50" height="20.80" fill="#000000"/>
<text x="357.5" y="322.0" font-size="8.2" text-anchor="start" fill="#000" stroke="#000" stroke-width="0.22" textLength="15.1" lengthAdjust="spacingAndGlyphs">HVY</text>
<text x="357.5" y="343.1" font-size="8.2" text-anchor="start" fill="#000" stroke="#000" stroke-width="0.22" textLength="24.7" lengthAdjust="spacingAndGlyphs">M.HVY</text>
<text x="357.5" y="365.7" font-size="8.2" text-anchor="start" fill="#000" stroke="#000" stroke-width="0.22" textLength="18.7" lengthAdjust="spacingAndGlyphs">MOD</text>
<text x="357.5" y="389.1" font-size="8.2" text-anchor="start" fill="#000" stroke="#000" stroke-width="0.22" textLength="24.7" lengthAdjust="spacingAndGlyphs">L.MOD</text>
<text x="357.5" y="412.0" font-size="8.2" text-anchor="start" fill="#000" stroke="#000" stroke-width="0.22" textLength="14.5" lengthAdjust="spacingAndGlyphs">LGT</text>
<text x="357.5" y="435.2" font-size="8.2" text-anchor="start" fill="#000" stroke="#000" stroke-width="0.22" textLength="22.1" lengthAdjust="spacingAndGlyphs">T.LGT</text>
<text x="357.5" y="458.2" font-size="8.2" text-anchor="start" fill="#000" stroke="#000" stroke-width="0.22" textLength="16.7" lengthAdjust="spacingAndGlyphs">TRC</text>
<text x="357.5" y="476.0" font-size="8.2" text-anchor="start" fill="#000" stroke="#000" stroke-width="0.22" textLength="22.5" lengthAdjust="spacingAndGlyphs">NONE</text>
<text x="10.5" y="521.8" font-size="9.4" text-anchor="start" fill="#000" stroke="#000" stroke-width="0.22" textLength="80.0" lengthAdjust="spacingAndGlyphs">Alt (1000ft MSL)</text>
<text x="170.7" y="521.6" font-size="9.4" font-weight="bold" text-anchor="start" fill="#000" stroke="#000" stroke-width="0.1" textLength="51.4" lengthAdjust="spacingAndGlyphs">Drop Size</text>
<text x="289.4" y="521.7" font-size="9.4" text-anchor="start" fill="#000" stroke="#000" stroke-width="0.22" textLength="92.5" lengthAdjust="spacingAndGlyphs">Drop Size(microns)</text>
<rect x="45.00" y="523.00" width="303.00" height="1.00" fill="#ffffff"/>
<rect x="347.00" y="523.00" width="1.00" height="163.00" fill="#ffffff"/>
<rect x="45.00" y="524.00" width="302.00" height="162.00" fill="#000"/>
<rect x="45.00" y="524.00" width="188.00" height="159.00" fill="#000080"/>
<rect x="45.00" y="643.00" width="2.00" height="34.00" fill="#b30000"/>
<rect x="47.00" y="644.00" width="3.00" height="33.00" fill="#ffa200"/>
<rect x="50.00" y="644.00" width="5.00" height="33.00" fill="#ff5500"/>
<rect x="55.00" y="643.00" width="2.00" height="34.00" fill="#ff9100"/>
<rect x="57.00" y="643.50" width="3.00" height="33.50" fill="#ff3300"/>
<rect x="60.00" y="644.00" width="2.00" height="33.00" fill="#d5ff2a"/>
<rect x="62.00" y="642.50" width="3.00" height="34.50" fill="#d50000"/>
<rect x="65.00" y="644.00" width="2.00" height="33.00" fill="#80ff80"/>
<rect x="67.00" y="643.00" width="5.00" height="34.00" fill="#ffff00"/>
<rect x="72.00" y="644.00" width="4.00" height="33.00" fill="#a2ff5e"/>
<rect x="76.00" y="643.00" width="1.00" height="34.00" fill="#ff9100"/>
<rect x="77.00" y="642.50" width="3.00" height="34.50" fill="#ff0800"/>
<rect x="80.00" y="643.50" width="2.00" height="33.50" fill="#ffd500"/>
<rect x="82.00" y="644.00" width="3.00" height="33.00" fill="#ffa200"/>
<rect x="85.00" y="643.00" width="5.00" height="34.00" fill="#ff0800"/>
<rect x="90.00" y="643.00" width="6.00" height="34.00" fill="#ff5500"/>
<rect x="96.00" y="642.50" width="4.00" height="34.50" fill="#91ff6e"/>
<rect x="100.00" y="644.00" width="5.00" height="33.00" fill="#ff6e00"/>
<rect x="105.00" y="640.30" width="2.00" height="36.70" fill="#e5ff1a"/>
<rect x="107.00" y="640.30" width="3.00" height="36.70" fill="#ffa200"/>
<rect x="110.00" y="640.30" width="4.00" height="36.70" fill="#ff2a00"/>
<rect x="114.00" y="640.30" width="3.00" height="36.70" fill="#fff700"/>
<rect x="117.00" y="642.50" width="3.00" height="34.50" fill="#a20000"/>
<rect x="120.00" y="642.50" width="3.00" height="34.50" fill="#c30000"/>
<rect x="123.00" y="642.50" width="2.00" height="34.50" fill="#b3ff4c"/>
<rect x="125.00" y="642.50" width="3.00" height="34.50" fill="#ff9100"/>
<rect x="128.00" y="643.00" width="2.00" height="34.00" fill="#ff5e00"/>
<rect x="130.00" y="643.00" width="3.00" height="34.00" fill="#d5ff2a"/>
<rect x="133.00" y="643.00" width="2.00" height="34.00" fill="#b30000"/>
<rect x="135.00" y="644.00" width="3.00" height="33.00" fill="#ff3c00"/>
<rect x="138.00" y="643.00" width="2.00" height="34.00" fill="#f7ff08"/>
<rect x="140.00" y="643.50" width="3.00" height="33.50" fill="#a20000"/>
<rect x="143.00" y="643.00" width="2.00" height="34.00" fill="#ff9100"/>
<rect x="145.00" y="643.50" width="3.00" height="33.50" fill="#a20000"/>
<rect x="148.00" y="642.50" width="2.00" height="34.50" fill="#ff2a00"/>
<rect x="150.00" y="644.00" width="3.00" height="33.00" fill="#ff1a00"/>
<rect x="153.00" y="642.50" width="2.00" height="34.50" fill="#e50000"/>
<rect x="155.00" y="642.50" width="3.00" height="34.50" fill="#ff5e00"/>
<rect x="158.00" y="642.50" width="2.00" height="34.50" fill="#f70000"/>
<rect x="160.00" y="644.00" width="3.00" height="33.00" fill="#a2ff5e"/>
<rect x="163.00" y="642.50" width="2.00" height="34.50" fill="#c30000"/>
<rect x="165.00" y="643.00" width="3.00" height="34.00" fill="#ffff00"/>
<rect x="168.00" y="643.50" width="2.00" height="33.50" fill="#d5ff2a"/>
<rect x="170.00" y="643.00" width="8.00" height="34.00" fill="#f70000"/>
<rect x="178.00" y="643.00" width="2.00" height="34.00" fill="#91ff6e"/>
<rect x="180.00" y="644.00" width="4.00" height="33.00" fill="#f70000"/>
<rect x="184.00" y="644.00" width="4.00" height="33.00" fill="#c30000"/>
<rect x="188.00" y="644.00" width="5.00" height="33.00" fill="#ff4c00"/>
<rect x="193.00" y="644.00" width="3.00" height="33.00" fill="#80ff80"/>
<rect x="196.00" y="644.00" width="2.00" height="33.00" fill="#c30000"/>
<rect x="198.00" y="644.00" width="5.00" height="33.00" fill="#77ff88"/>
<rect x="203.00" y="644.00" width="3.00" height="33.00" fill="#ffff00"/>
<rect x="208.00" y="644.00" width="3.00" height="33.00" fill="#0088ff"/>
<rect x="213.00" y="644.00" width="4.00" height="33.00" fill="#00f6ff"/>
<rect x="217.00" y="644.00" width="1.00" height="33.00" fill="#004dff"/>
<rect x="218.00" y="644.00" width="3.00" height="33.00" fill="#6eff90"/>
<rect x="221.00" y="644.00" width="2.00" height="33.00" fill="#d5ff2a"/>
<rect x="223.00" y="644.00" width="3.00" height="33.00" fill="#ffc300"/>
<rect x="226.00" y="644.00" width="4.00" height="33.00" fill="#c3ff3c"/>
<rect x="230.00" y="644.00" width="3.00" height="33.00" fill="#ffa200"/>
<rect x="112.00" y="668.00" width="3.00" height="4.00" fill="#ffd500"/>
<rect x="114.00" y="670.00" width="3.00" height="7.00" fill="#a20000"/>
<rect x="109.00" y="672.00" width="3.00" height="5.00" fill="#b30000"/>
<rect x="117.00" y="669.00" width="6.00" height="8.00" fill="#a20000"/>
<rect x="125.00" y="669.00" width="3.00" height="8.00" fill="#b30000"/>
<rect x="150.00" y="663.00" width="3.00" height="12.00" fill="#91ff6e"/>
<rect x="45.00" y="675.00" width="2.00" height="2.00" fill="#0000a2"/>
<rect x="103.00" y="676.00" width="4.00" height="1.00" fill="#004dff"/>
<rect x="150.00" y="676.00" width="4.00" height="1.00" fill="#00d4ff"/>
<rect x="233.00" y="524.00" width="114.00" height="162.00" fill="#000"/>
<rect x="45.00" y="683.00" width="188.00" height="3.00" fill="#000"/>
<rect x="40.00" y="667.80" width="5.00" height="1.20" fill="#000"/>
<text x="39.0" y="671.4" font-size="8.4" text-anchor="end" fill="#000" stroke="#000" stroke-width="0.22">2</text>
<rect x="40.00" y="655.80" width="5.00" height="1.20" fill="#000"/>
<text x="39.0" y="659.4" font-size="8.4" text-anchor="end" fill="#000" stroke="#000" stroke-width="0.22">4</text>
<rect x="40.00" y="643.80" width="5.00" height="1.20" fill="#000"/>
<text x="39.0" y="647.4" font-size="8.4" text-anchor="end" fill="#000" stroke="#000" stroke-width="0.22">6</text>
<rect x="40.00" y="631.80" width="5.00" height="1.20" fill="#000"/>
<text x="39.0" y="635.4" font-size="8.4" text-anchor="end" fill="#000" stroke="#000" stroke-width="0.22">8</text>
<rect x="40.00" y="619.80" width="5.00" height="1.20" fill="#000"/>
<text x="39.0" y="623.4" font-size="8.4" text-anchor="end" fill="#000" stroke="#000" stroke-width="0.22">10</text>
<rect x="40.00" y="607.80" width="5.00" height="1.20" fill="#000"/>
<text x="39.0" y="611.4" font-size="8.4" text-anchor="end" fill="#000" stroke="#000" stroke-width="0.22">12</text>
<rect x="40.00" y="595.80" width="5.00" height="1.20" fill="#000"/>
<text x="39.0" y="599.4" font-size="8.4" text-anchor="end" fill="#000" stroke="#000" stroke-width="0.22">14</text>
<rect x="40.00" y="583.80" width="5.00" height="1.20" fill="#000"/>
<text x="39.0" y="587.4" font-size="8.4" text-anchor="end" fill="#000" stroke="#000" stroke-width="0.22">16</text>
<rect x="40.00" y="571.80" width="5.00" height="1.20" fill="#000"/>
<text x="39.0" y="575.4" font-size="8.4" text-anchor="end" fill="#000" stroke="#000" stroke-width="0.22">18</text>
<rect x="40.00" y="559.80" width="5.00" height="1.20" fill="#000"/>
<text x="39.0" y="563.4" font-size="8.4" text-anchor="end" fill="#000" stroke="#000" stroke-width="0.22">20</text>
<rect x="40.00" y="547.80" width="5.00" height="1.20" fill="#000"/>
<text x="39.0" y="551.4" font-size="8.4" text-anchor="end" fill="#000" stroke="#000" stroke-width="0.22">22</text>
<rect x="40.00" y="535.80" width="5.00" height="1.20" fill="#000"/>
<text x="39.0" y="539.4" font-size="8.4" text-anchor="end" fill="#000" stroke="#000" stroke-width="0.22">24</text>
<rect x="40.00" y="525.60" width="5.00" height="1.20" fill="#000"/>
<text x="39.0" y="529.2" font-size="8.4" text-anchor="end" fill="#000" stroke="#000" stroke-width="0.22">26</text>
<rect x="40.00" y="678.00" width="5.00" height="1.20" fill="#000"/>
<text x="38.5" y="678.0" font-size="8.4" text-anchor="end" fill="#000" stroke="#000" stroke-width="0.22">0</text>
<rect x="45.00" y="686.00" width="1.30" height="10.00" fill="#000"/>
<text x="40.4" y="705.8" font-size="8.6" text-anchor="start" fill="#000" stroke="#000" stroke-width="0.22" textLength="22.8" lengthAdjust="spacingAndGlyphs">21:40</text>
<rect x="70.17" y="686.00" width="1.30" height="5.50" fill="#000"/>
<rect x="95.33" y="686.00" width="1.30" height="10.00" fill="#000"/>
<text x="90.7" y="705.8" font-size="8.6" text-anchor="start" fill="#000" stroke="#000" stroke-width="0.22" textLength="22.8" lengthAdjust="spacingAndGlyphs">22:00</text>
<rect x="120.50" y="686.00" width="1.30" height="5.50" fill="#000"/>
<rect x="145.67" y="686.00" width="1.30" height="10.00" fill="#000"/>
<text x="141.1" y="705.8" font-size="8.6" text-anchor="start" fill="#000" stroke="#000" stroke-width="0.22" textLength="22.8" lengthAdjust="spacingAndGlyphs">22:20</text>
<rect x="170.83" y="686.00" width="1.30" height="5.50" fill="#000"/>
<rect x="196.00" y="686.00" width="1.30" height="10.00" fill="#000"/>
<text x="191.4" y="705.8" font-size="8.6" text-anchor="start" fill="#000" stroke="#000" stroke-width="0.22" textLength="22.8" lengthAdjust="spacingAndGlyphs">22:40</text>
<rect x="221.17" y="686.00" width="1.30" height="5.50" fill="#000"/>
<rect x="246.33" y="686.00" width="1.30" height="10.00" fill="#000"/>
<text x="241.7" y="705.8" font-size="8.6" text-anchor="start" fill="#000" stroke="#000" stroke-width="0.22" textLength="22.8" lengthAdjust="spacingAndGlyphs">23:00</text>
<rect x="271.50" y="686.00" width="1.30" height="5.50" fill="#000"/>
<rect x="296.67" y="686.00" width="1.30" height="10.00" fill="#000"/>
<text x="292.1" y="705.8" font-size="8.6" text-anchor="start" fill="#000" stroke="#000" stroke-width="0.22" textLength="22.8" lengthAdjust="spacingAndGlyphs">23:20</text>
<rect x="321.83" y="686.00" width="1.30" height="5.50" fill="#000"/>
<rect x="346.00" y="686.00" width="1.30" height="10.00" fill="#000"/>
<text x="341.4" y="705.8" font-size="8.6" text-anchor="start" fill="#000" stroke="#000" stroke-width="0.22" textLength="22.8" lengthAdjust="spacingAndGlyphs">23:40</text>
<defs><linearGradient id="gjet" x1="0" y1="0" x2="0" y2="1"><stop offset="0.00" stop-color="#800000"/><stop offset="0.05" stop-color="#b30000"/><stop offset="0.10" stop-color="#e50000"/><stop offset="0.15" stop-color="#ff1a00"/><stop offset="0.20" stop-color="#ff4c00"/><stop offset="0.25" stop-color="#ff8000"/><stop offset="0.30" stop-color="#ffb300"/><stop offset="0.35" stop-color="#ffe500"/><stop offset="0.40" stop-color="#e5ff1a"/><stop offset="0.45" stop-color="#b3ff4c"/><stop offset="0.50" stop-color="#80ff80"/><stop offset="0.55" stop-color="#4cffb3"/><stop offset="0.60" stop-color="#1affe5"/><stop offset="0.65" stop-color="#00e5ff"/><stop offset="0.70" stop-color="#00b3ff"/><stop offset="0.75" stop-color="#0080ff"/><stop offset="0.80" stop-color="#004cff"/><stop offset="0.85" stop-color="#001aff"/><stop offset="0.90" stop-color="#0000e5"/><stop offset="0.95" stop-color="#0000b3"/><stop offset="1.00" stop-color="#000080"/></linearGradient></defs>
<rect x="350.00" y="524.00" width="6.50" height="166.00" fill="url(#gjet)"/>
<rect x="357.00" y="525.40" width="6.50" height="1.20" fill="#000"/>
<text x="363.6" y="529.0" font-size="8.4" text-anchor="start" fill="#000" stroke="#000" stroke-width="0.22">60</text>
<rect x="357.00" y="550.20" width="6.50" height="1.20" fill="#000"/>
<text x="363.6" y="553.8" font-size="8.4" text-anchor="start" fill="#000" stroke="#000" stroke-width="0.22">50</text>
<rect x="357.00" y="577.20" width="6.50" height="1.20" fill="#000"/>
<text x="363.6" y="580.8" font-size="8.4" text-anchor="start" fill="#000" stroke="#000" stroke-width="0.22">40</text>
<rect x="357.00" y="604.10" width="6.50" height="1.20" fill="#000"/>
<text x="363.6" y="607.7" font-size="8.4" text-anchor="start" fill="#000" stroke="#000" stroke-width="0.22">30</text>
<rect x="357.00" y="631.10" width="6.50" height="1.20" fill="#000"/>
<text x="363.6" y="634.7" font-size="8.4" text-anchor="start" fill="#000" stroke="#000" stroke-width="0.22">20</text>
<rect x="357.00" y="658.00" width="6.50" height="1.20" fill="#000"/>
<text x="363.6" y="661.6" font-size="8.4" text-anchor="start" fill="#000" stroke="#000" stroke-width="0.22">10</text>
<rect x="357.00" y="682.80" width="6.50" height="1.20" fill="#000"/>
<text x="363.6" y="684.0" font-size="8.4" text-anchor="start" fill="#000" stroke="#000" stroke-width="0.22">0</text>
<text x="402.6" y="17.6" font-size="9.4" text-anchor="start" fill="#000" stroke="#000" stroke-width="0.22" textLength="80.0" lengthAdjust="spacingAndGlyphs">Alt (1000ft MSL)</text>
<rect x="437.00" y="19.00" width="303.00" height="1.00" fill="#ffffff"/>
<rect x="739.00" y="19.00" width="1.00" height="134.00" fill="#ffffff"/>
<rect x="437.00" y="20.00" width="302.00" height="133.00" fill="#000"/>
<rect x="437.00" y="117.00" width="2.00" height="29.00" fill="#ffffff"/>
<rect x="439.00" y="116.44" width="2.00" height="29.56" fill="#ffffff"/>
<rect x="441.00" y="116.39" width="2.00" height="29.61" fill="#ffffff"/>
<rect x="443.00" y="116.83" width="2.00" height="29.17" fill="#ffffff"/>
<rect x="445.00" y="115.78" width="2.00" height="30.22" fill="#ffffff"/>
<rect x="447.00" y="115.22" width="2.00" height="30.78" fill="#ffffff"/>
<rect x="449.00" y="115.67" width="2.00" height="30.33" fill="#ffffff"/>
<rect x="451.00" y="115.61" width="2.00" height="30.39" fill="#ffffff"/>
<rect x="453.00" y="115.56" width="2.00" height="30.44" fill="#ffffff"/>
<rect x="455.00" y="115.50" width="2.00" height="30.50" fill="#ffffff"/>
<rect x="457.00" y="115.95" width="2.00" height="30.05" fill="#ffffff"/>
<rect x="459.00" y="114.90" width="2.00" height="31.10" fill="#ffffff"/>
<rect x="461.00" y="115.35" width="2.00" height="30.65" fill="#ffffff"/>
<rect x="463.00" y="114.80" width="2.00" height="31.20" fill="#ffffff"/>
<rect x="465.00" y="116.25" width="2.00" height="29.75" fill="#ffffff"/>
<rect x="467.00" y="115.20" width="2.00" height="30.80" fill="#ffffff"/>
<rect x="469.00" y="116.15" width="2.00" height="29.85" fill="#ffffff"/>
<rect x="471.00" y="115.10" width="2.00" height="30.90" fill="#ffffff"/>
<rect x="473.00" y="115.05" width="2.00" height="30.95" fill="#ffffff"/>
<rect x="475.00" y="115.00" width="2.00" height="31.00" fill="#ffffff"/>
<rect x="477.00" y="114.42" width="2.00" height="31.58" fill="#ffffff"/>
<rect x="479.00" y="115.34" width="2.00" height="30.66" fill="#ffffff"/>
<rect x="481.00" y="114.76" width="2.00" height="31.24" fill="#ffffff"/>
<rect x="483.00" y="114.18" width="2.00" height="31.82" fill="#ffffff"/>
<rect x="485.00" y="114.60" width="2.00" height="31.40" fill="#ffffff"/>
<rect x="487.00" y="114.52" width="2.00" height="31.48" fill="#ffffff"/>
<rect x="489.00" y="114.44" width="2.00" height="31.56" fill="#ffffff"/>
<rect x="491.00" y="115.36" width="2.00" height="30.64" fill="#ffffff"/>
<rect x="493.00" y="115.28" width="2.00" height="30.72" fill="#ffffff"/>
<rect x="495.00" y="113.70" width="2.00" height="32.30" fill="#ffffff"/>
<rect x="497.00" y="114.12" width="2.00" height="31.88" fill="#ffffff"/>
<rect x="499.00" y="114.04" width="2.00" height="31.96" fill="#ffffff"/>
<rect x="501.00" y="114.07" width="2.00" height="31.93" fill="#ffffff"/>
<rect x="503.00" y="114.20" width="2.00" height="31.80" fill="#ffffff"/>
<rect x="505.00" y="114.33" width="2.00" height="31.67" fill="#ffffff"/>
<rect x="507.00" y="114.47" width="2.00" height="31.53" fill="#ffffff"/>
<rect x="509.00" y="114.60" width="2.00" height="31.40" fill="#ffffff"/>
<rect x="511.00" y="114.73" width="2.00" height="31.27" fill="#ffffff"/>
<rect x="513.00" y="115.37" width="2.00" height="30.63" fill="#ffffff"/>
<rect x="515.00" y="115.50" width="2.00" height="30.50" fill="#ffffff"/>
<rect x="517.00" y="115.08" width="2.00" height="30.92" fill="#ffffff"/>
<rect x="519.00" y="116.16" width="2.00" height="29.84" fill="#ffffff"/>
<rect x="521.00" y="115.24" width="2.00" height="30.76" fill="#ffffff"/>
<rect x="523.00" y="115.32" width="2.00" height="30.68" fill="#ffffff"/>
<rect x="525.00" y="115.40" width="2.00" height="30.60" fill="#ffffff"/>
<rect x="527.00" y="114.98" width="2.00" height="31.02" fill="#ffffff"/>
<rect x="529.00" y="116.06" width="2.00" height="29.94" fill="#ffffff"/>
<rect x="531.00" y="115.64" width="2.00" height="30.36" fill="#ffffff"/>
<rect x="533.00" y="116.22" width="2.00" height="29.78" fill="#ffffff"/>
<rect x="535.00" y="115.30" width="2.00" height="30.70" fill="#ffffff"/>
<rect x="537.00" y="115.88" width="2.00" height="30.12" fill="#ffffff"/>
<rect x="539.00" y="115.96" width="2.00" height="30.04" fill="#ffffff"/>
<rect x="541.00" y="116.52" width="2.00" height="29.48" fill="#ffffff"/>
<rect x="543.00" y="116.06" width="2.00" height="29.94" fill="#ffffff"/>
<rect x="545.00" y="116.60" width="2.00" height="29.40" fill="#ffffff"/>
<rect x="547.00" y="116.64" width="2.00" height="29.36" fill="#ffffff"/>
<rect x="549.00" y="117.18" width="2.00" height="28.82" fill="#ffffff"/>
<rect x="551.00" y="117.22" width="2.00" height="28.78" fill="#ffffff"/>
<rect x="553.00" y="116.26" width="2.00" height="29.74" fill="#ffffff"/>
<rect x="555.00" y="117.30" width="2.00" height="28.70" fill="#ffffff"/>
<rect x="557.00" y="116.84" width="2.00" height="29.16" fill="#ffffff"/>
<rect x="559.00" y="116.38" width="2.00" height="29.62" fill="#ffffff"/>
<rect x="561.00" y="116.92" width="2.00" height="29.08" fill="#ffffff"/>
<rect x="563.00" y="116.96" width="2.00" height="29.04" fill="#ffffff"/>
<rect x="565.00" y="117.00" width="2.00" height="29.00" fill="#ffffff"/>
<rect x="567.00" y="116.04" width="2.00" height="29.96" fill="#ffffff"/>
<rect x="569.00" y="117.08" width="2.00" height="28.92" fill="#ffffff"/>
<rect x="571.00" y="116.62" width="2.00" height="29.38" fill="#ffffff"/>
<rect x="573.00" y="116.16" width="2.00" height="29.84" fill="#ffffff"/>
<rect x="575.00" y="116.20" width="2.00" height="29.80" fill="#ffffff"/>
<rect x="577.00" y="116.74" width="2.00" height="29.26" fill="#ffffff"/>
<rect x="579.00" y="116.78" width="2.00" height="29.22" fill="#ffffff"/>
<rect x="581.00" y="117.32" width="2.00" height="28.68" fill="#ffffff"/>
<rect x="583.00" y="116.86" width="2.00" height="29.14" fill="#ffffff"/>
<rect x="585.00" y="117.40" width="2.00" height="28.60" fill="#ffffff"/>
<rect x="587.00" y="116.44" width="2.00" height="29.56" fill="#ffffff"/>
<rect x="589.00" y="116.98" width="2.00" height="29.02" fill="#ffffff"/>
<rect x="591.00" y="118.01" width="2.00" height="27.99" fill="#ffffff"/>
<rect x="593.00" y="116.53" width="2.00" height="29.47" fill="#ffffff"/>
<rect x="595.00" y="117.55" width="2.00" height="28.45" fill="#ffffff"/>
<rect x="597.00" y="116.57" width="2.00" height="29.43" fill="#ffffff"/>
<rect x="599.00" y="118.09" width="2.00" height="27.91" fill="#ffffff"/>
<rect x="601.00" y="117.11" width="2.00" height="28.89" fill="#ffffff"/>
<rect x="603.00" y="116.63" width="2.00" height="29.37" fill="#ffffff"/>
<rect x="605.00" y="117.15" width="2.00" height="28.85" fill="#ffffff"/>
<rect x="607.00" y="117.17" width="2.00" height="28.83" fill="#ffffff"/>
<rect x="609.00" y="118.19" width="2.00" height="27.81" fill="#ffffff"/>
<rect x="611.00" y="117.21" width="2.00" height="28.79" fill="#ffffff"/>
<rect x="613.00" y="117.23" width="2.00" height="28.77" fill="#ffffff"/>
<rect x="615.00" y="117.25" width="2.00" height="28.75" fill="#ffffff"/>
<rect x="617.00" y="116.77" width="2.00" height="29.23" fill="#ffffff"/>
<rect x="619.00" y="117.79" width="2.00" height="28.21" fill="#ffffff"/>
<rect x="621.00" y="118.31" width="2.00" height="27.69" fill="#ffffff"/>
<rect x="623.00" y="117.83" width="2.00" height="28.17" fill="#ffffff"/>
<rect x="625.00" y="118.35" width="2.00" height="27.65" fill="#ffffff"/>
<rect x="627.00" y="117.87" width="2.00" height="28.13" fill="#ffffff"/>
<rect x="629.00" y="116.89" width="2.00" height="29.11" fill="#ffffff"/>
<rect x="631.00" y="117.41" width="2.00" height="28.59" fill="#ffffff"/>
<rect x="633.00" y="118.43" width="2.00" height="27.57" fill="#ffffff"/>
<rect x="635.00" y="117.95" width="2.00" height="28.05" fill="#ffffff"/>
<rect x="637.00" y="117.97" width="2.00" height="28.03" fill="#ffffff"/>
<rect x="639.00" y="117.49" width="2.00" height="28.51" fill="#ffffff"/>
<rect x="641.00" y="117.01" width="2.00" height="28.99" fill="#ffffff"/>
<rect x="643.00" y="117.53" width="2.00" height="28.47" fill="#ffffff"/>
<rect x="645.00" y="117.55" width="2.00" height="28.45" fill="#ffffff"/>
<rect x="647.00" y="118.07" width="2.00" height="27.93" fill="#ffffff"/>
<rect x="649.00" y="118.59" width="2.00" height="27.41" fill="#ffffff"/>
<rect x="651.00" y="118.61" width="2.00" height="27.39" fill="#ffffff"/>
<rect x="653.00" y="118.13" width="2.00" height="27.87" fill="#ffffff"/>
<rect x="655.00" y="117.65" width="2.00" height="28.35" fill="#ffffff"/>
<rect x="657.00" y="118.17" width="2.00" height="27.83" fill="#ffffff"/>
<rect x="659.00" y="118.19" width="2.00" height="27.81" fill="#ffffff"/>
<rect x="661.00" y="118.71" width="2.00" height="27.29" fill="#ffffff"/>
<rect x="663.00" y="117.73" width="2.00" height="28.27" fill="#ffffff"/>
<rect x="665.00" y="118.25" width="2.00" height="27.75" fill="#ffffff"/>
<rect x="667.00" y="118.27" width="2.00" height="27.73" fill="#ffffff"/>
<rect x="669.00" y="118.29" width="2.00" height="27.71" fill="#ffffff"/>
<rect x="671.00" y="117.81" width="2.00" height="28.19" fill="#ffffff"/>
<rect x="673.00" y="117.83" width="2.00" height="28.17" fill="#ffffff"/>
<rect x="675.00" y="117.85" width="2.00" height="28.15" fill="#ffffff"/>
<rect x="677.00" y="118.37" width="2.00" height="27.63" fill="#ffffff"/>
<rect x="679.00" y="117.39" width="2.00" height="28.61" fill="#ffffff"/>
<rect x="681.00" y="117.91" width="2.00" height="28.09" fill="#ffffff"/>
<rect x="683.00" y="117.93" width="2.00" height="28.07" fill="#ffffff"/>
<rect x="685.00" y="117.95" width="2.00" height="28.05" fill="#ffffff"/>
<rect x="687.00" y="118.97" width="2.00" height="27.03" fill="#ffffff"/>
<rect x="689.00" y="118.99" width="2.00" height="27.01" fill="#ffffff"/>
<rect x="691.00" y="117.53" width="2.00" height="28.47" fill="#ffffff"/>
<rect x="693.00" y="118.09" width="2.00" height="27.91" fill="#ffffff"/>
<rect x="695.00" y="118.15" width="2.00" height="27.85" fill="#ffffff"/>
<rect x="697.00" y="119.21" width="2.00" height="26.79" fill="#ffffff"/>
<rect x="699.00" y="118.78" width="2.00" height="27.22" fill="#ffffff"/>
<rect x="701.00" y="118.84" width="2.00" height="27.16" fill="#ffffff"/>
<rect x="703.00" y="117.90" width="2.00" height="28.10" fill="#ffffff"/>
<rect x="705.00" y="117.96" width="2.00" height="28.04" fill="#ffffff"/>
<rect x="707.00" y="118.52" width="2.00" height="27.48" fill="#ffffff"/>
<rect x="709.00" y="118.58" width="2.00" height="27.42" fill="#ffffff"/>
<rect x="711.00" y="118.64" width="2.00" height="27.36" fill="#ffffff"/>
<rect x="713.00" y="118.20" width="2.00" height="27.80" fill="#ffffff"/>
<rect x="715.00" y="119.27" width="2.00" height="26.73" fill="#ffffff"/>
<rect x="717.00" y="118.83" width="2.00" height="27.17" fill="#ffffff"/>
<rect x="719.00" y="118.89" width="2.00" height="27.11" fill="#ffffff"/>
<rect x="721.00" y="119.95" width="2.00" height="26.05" fill="#ffffff"/>
<rect x="723.00" y="119.01" width="2.00" height="26.99" fill="#ffffff"/>
<rect x="725.00" y="118.57" width="2.00" height="27.43" fill="#ffffff"/>
<rect x="727.00" y="119.13" width="2.00" height="26.87" fill="#ffffff"/>
<rect x="729.00" y="119.19" width="2.00" height="26.81" fill="#ffffff"/>
<rect x="731.00" y="118.76" width="2.00" height="27.24" fill="#ffffff"/>
<rect x="733.00" y="119.82" width="2.00" height="26.18" fill="#ffffff"/>
<rect x="735.00" y="119.38" width="2.00" height="26.62" fill="#ffffff"/>
<rect x="737.00" y="119.44" width="2.00" height="26.56" fill="#ffffff"/>
<rect x="590.00" y="145.30" width="22.00" height="1.00" fill="#000"/>
<rect x="439.00" y="144.00" width="4.00" height="1.00" fill="#000"/>
<rect x="446.00" y="144.00" width="4.00" height="1.00" fill="#000"/>
<rect x="492.00" y="144.00" width="14.00" height="1.00" fill="#000"/>
<rect x="508.00" y="144.00" width="6.00" height="1.00" fill="#000"/>
<rect x="517.00" y="144.00" width="5.00" height="1.00" fill="#000"/>
<rect x="536.00" y="144.00" width="16.00" height="1.00" fill="#000"/>
<rect x="554.00" y="144.00" width="6.00" height="1.00" fill="#000"/>
<rect x="645.00" y="32.00" width="3.00" height="1.30" fill="#ffffff"/>
<rect x="634.00" y="69.00" width="3.00" height="1.30" fill="#ffffff"/>
<rect x="508.00" y="97.00" width="3.00" height="1.30" fill="#ffffff"/>
<rect x="547.00" y="106.00" width="3.00" height="1.30" fill="#ffffff"/>
<rect x="729.00" y="64.00" width="3.00" height="1.30" fill="#ffffff"/>
<rect x="664.00" y="83.00" width="3.00" height="1.30" fill="#ffffff"/>
<rect x="666.00" y="104.00" width="3.00" height="1.30" fill="#ffffff"/>
<rect x="733.00" y="95.00" width="3.00" height="1.30" fill="#ffffff"/>
<rect x="431.00" y="46.40" width="6.00" height="1.20" fill="#000"/>
<text x="430.5" y="50.0" font-size="8.4" text-anchor="end" fill="#000" stroke="#000" stroke-width="0.22">20</text>
<rect x="431.00" y="73.50" width="6.00" height="1.20" fill="#000"/>
<text x="430.5" y="77.1" font-size="8.4" text-anchor="end" fill="#000" stroke="#000" stroke-width="0.22">15</text>
<rect x="431.00" y="100.60" width="6.00" height="1.20" fill="#000"/>
<text x="430.5" y="104.2" font-size="8.4" text-anchor="end" fill="#000" stroke="#000" stroke-width="0.22">10</text>
<rect x="431.00" y="127.70" width="6.00" height="1.20" fill="#000"/>
<text x="430.5" y="131.3" font-size="8.4" text-anchor="end" fill="#000" stroke="#000" stroke-width="0.22">5</text>
<rect x="431.00" y="21.80" width="6.00" height="1.20" fill="#000"/>
<text x="430.5" y="25.4" font-size="8.4" text-anchor="end" fill="#000" stroke="#000" stroke-width="0.22">25</text>
<rect x="431.00" y="152.70" width="6.00" height="1.20" fill="#000"/>
<text x="430.5" y="153.0" font-size="8.4" text-anchor="end" fill="#000" stroke="#000" stroke-width="0.22">0</text>
<rect x="437.00" y="153.00" width="1.30" height="10.00" fill="#000"/>
<text x="432.4" y="172.6" font-size="8.6" text-anchor="start" fill="#000" stroke="#000" stroke-width="0.22" textLength="22.8" lengthAdjust="spacingAndGlyphs">21:40</text>
<rect x="462.17" y="153.00" width="1.30" height="5.50" fill="#000"/>
<rect x="487.33" y="153.00" width="1.30" height="10.00" fill="#000"/>
<text x="482.7" y="172.6" font-size="8.6" text-anchor="start" fill="#000" stroke="#000" stroke-width="0.22" textLength="22.8" lengthAdjust="spacingAndGlyphs">22:00</text>
<rect x="512.50" y="153.00" width="1.30" height="5.50" fill="#000"/>
<rect x="537.67" y="153.00" width="1.30" height="10.00" fill="#000"/>
<text x="533.1" y="172.6" font-size="8.6" text-anchor="start" fill="#000" stroke="#000" stroke-width="0.22" textLength="22.8" lengthAdjust="spacingAndGlyphs">22:20</text>
<rect x="562.83" y="153.00" width="1.30" height="5.50" fill="#000"/>
<rect x="588.00" y="153.00" width="1.30" height="10.00" fill="#000"/>
<text x="583.4" y="172.6" font-size="8.6" text-anchor="start" fill="#000" stroke="#000" stroke-width="0.22" textLength="22.8" lengthAdjust="spacingAndGlyphs">22:40</text>
<rect x="613.17" y="153.00" width="1.30" height="5.50" fill="#000"/>
<rect x="638.33" y="153.00" width="1.30" height="10.00" fill="#000"/>
<text x="633.7" y="172.6" font-size="8.6" text-anchor="start" fill="#000" stroke="#000" stroke-width="0.22" textLength="22.8" lengthAdjust="spacingAndGlyphs">23:00</text>
<rect x="663.50" y="153.00" width="1.30" height="5.50" fill="#000"/>
<rect x="688.67" y="153.00" width="1.30" height="10.00" fill="#000"/>
<text x="684.1" y="172.6" font-size="8.6" text-anchor="start" fill="#000" stroke="#000" stroke-width="0.22" textLength="22.8" lengthAdjust="spacingAndGlyphs">23:20</text>
<rect x="713.83" y="153.00" width="1.30" height="5.50" fill="#000"/>
<rect x="738.00" y="153.00" width="1.30" height="10.00" fill="#000"/>
<text x="733.4" y="172.6" font-size="8.6" text-anchor="start" fill="#000" stroke="#000" stroke-width="0.22" textLength="22.8" lengthAdjust="spacingAndGlyphs">23:40</text>
<text x="402.2" y="195.5" font-size="9.4" text-anchor="start" fill="#000" stroke="#000" stroke-width="0.22" textLength="80.0" lengthAdjust="spacingAndGlyphs">Alt (1000ft MSL)</text>
<text x="718.6" y="195.5" font-size="9.4" text-anchor="start" fill="#000" stroke="#000" stroke-width="0.22" textLength="54.5" lengthAdjust="spacingAndGlyphs">LWC(g/m3)</text>
<rect x="437.00" y="197.00" width="303.00" height="1.00" fill="#ffffff"/>
<rect x="739.00" y="197.00" width="1.00" height="134.00" fill="#ffffff"/>
<rect x="437.00" y="198.00" width="302.00" height="133.00" fill="#000"/>
<defs><filter id="fbl" x="-5%" y="-30%" width="110%" height="160%"><feGaussianBlur stdDeviation="0.6 0.8"/></filter><clipPath id="cplwc"><rect x="437" y="280" width="302" height="46"/></clipPath></defs>
<g filter="url(#fbl)" clip-path="url(#cplwc)">
<rect x="437.00" y="294.30" width="3.00" height="29.00" fill="#280000"/>
<rect x="440.00" y="293.30" width="2.00" height="30.00" fill="#300000"/>
<rect x="442.00" y="293.80" width="1.00" height="29.50" fill="#600000"/>
<rect x="443.00" y="293.80" width="1.00" height="29.50" fill="#5c0000"/>
<rect x="444.00" y="292.80" width="1.00" height="30.50" fill="#250000"/>
<rect x="445.00" y="292.80" width="3.00" height="30.50" fill="#250000"/>
<rect x="448.00" y="293.30" width="2.00" height="30.00" fill="#3c0000"/>
<rect x="450.00" y="292.80" width="1.00" height="30.50" fill="#2f0000"/>
<rect x="451.00" y="293.80" width="1.00" height="29.50" fill="#250000"/>
<rect x="452.00" y="292.80" width="2.00" height="30.50" fill="#300000"/>
<rect x="454.00" y="293.30" width="2.00" height="30.00" fill="#280000"/>
<rect x="456.00" y="293.30" width="2.00" height="30.00" fill="#250000"/>
<rect x="458.00" y="292.80" width="1.00" height="30.50" fill="#350000"/>
<rect x="459.00" y="293.30" width="3.00" height="30.00" fill="#360000"/>
<rect x="462.00" y="294.30" width="1.00" height="29.00" fill="#220000"/>
<rect x="463.00" y="293.30" width="2.00" height="30.00" fill="#270000"/>
<rect x="465.00" y="293.30" width="1.00" height="30.00" fill="#2b0000"/>
<rect x="466.00" y="294.30" width="1.00" height="29.00" fill="#230000"/>
<rect x="467.00" y="294.30" width="3.00" height="29.00" fill="#310000"/>
<rect x="470.00" y="293.30" width="3.00" height="30.00" fill="#280000"/>
<rect x="473.00" y="294.30" width="1.00" height="29.00" fill="#240000"/>
<rect x="474.00" y="293.30" width="1.00" height="30.00" fill="#260000"/>
<rect x="475.00" y="293.80" width="2.00" height="29.50" fill="#2e0000"/>
<rect x="477.00" y="293.30" width="1.00" height="30.00" fill="#300000"/>
<rect x="478.00" y="293.30" width="3.00" height="30.00" fill="#3c0000"/>
<rect x="481.00" y="294.30" width="2.00" height="29.00" fill="#2b0000"/>
<rect x="483.00" y="293.80" width="1.00" height="29.50" fill="#240000"/>
<rect x="484.00" y="292.80" width="2.00" height="30.50" fill="#250000"/>
<rect x="486.00" y="293.50" width="2.00" height="29.80" fill="#220000"/>
<rect x="488.00" y="293.00" width="2.00" height="30.30" fill="#240000"/>
<rect x="490.00" y="293.00" width="2.00" height="30.30" fill="#270000"/>
<rect x="492.00" y="293.50" width="1.00" height="29.80" fill="#270000"/>
<rect x="493.00" y="293.00" width="1.00" height="30.30" fill="#2e0000"/>
<rect x="494.00" y="293.00" width="3.00" height="30.30" fill="#2d0000"/>
<rect x="497.00" y="293.50" width="2.00" height="29.80" fill="#480000"/>
<rect x="499.00" y="293.50" width="1.00" height="29.80" fill="#4c0000"/>
<rect x="500.00" y="293.50" width="2.00" height="29.80" fill="#270000"/>
<rect x="502.00" y="292.50" width="2.00" height="30.80" fill="#310000"/>
<rect x="504.00" y="292.50" width="2.00" height="30.80" fill="#520000"/>
<rect x="506.00" y="292.50" width="1.00" height="30.80" fill="#550000"/>
<rect x="507.00" y="292.50" width="2.00" height="30.80" fill="#3f0000"/>
<rect x="509.00" y="293.50" width="2.00" height="29.80" fill="#480000"/>
<rect x="511.00" y="292.50" width="2.00" height="30.80" fill="#3b0000"/>
<rect x="513.00" y="292.50" width="3.00" height="30.80" fill="#2d0000"/>
<rect x="516.00" y="293.50" width="2.00" height="29.80" fill="#2a0000"/>
<rect x="518.00" y="293.00" width="1.00" height="30.30" fill="#2a0000"/>
<rect x="519.00" y="292.50" width="2.00" height="30.80" fill="#2e0000"/>
<rect x="521.00" y="292.50" width="2.00" height="30.80" fill="#250000"/>
<rect x="523.00" y="293.50" width="3.00" height="29.80" fill="#2b0000"/>
<rect x="526.00" y="293.50" width="1.00" height="29.80" fill="#570000"/>
<rect x="527.00" y="293.50" width="1.00" height="29.80" fill="#560000"/>
<rect x="528.00" y="293.50" width="2.00" height="29.80" fill="#430000"/>
<rect x="530.00" y="293.50" width="1.00" height="29.80" fill="#350000"/>
<rect x="531.00" y="292.50" width="2.00" height="30.80" fill="#3c0000"/>
<rect x="533.00" y="293.50" width="1.00" height="29.80" fill="#2e0000"/>
<rect x="534.00" y="292.50" width="1.00" height="30.80" fill="#300000"/>
<rect x="535.00" y="293.50" width="2.00" height="29.80" fill="#2b0000"/>
<rect x="537.00" y="293.30" width="3.00" height="30.00" fill="#230000"/>
<rect x="540.00" y="294.30" width="1.00" height="29.00" fill="#230000"/>
<rect x="541.00" y="292.80" width="3.00" height="30.50" fill="#2b0000"/>
<rect x="544.00" y="293.30" width="1.00" height="30.00" fill="#230000"/>
<rect x="545.00" y="293.30" width="2.00" height="30.00" fill="#230000"/>
<rect x="547.00" y="294.30" width="2.00" height="29.00" fill="#2a0000"/>
<rect x="549.00" y="293.30" width="3.00" height="30.00" fill="#2d0000"/>
<rect x="552.00" y="293.80" width="1.00" height="29.50" fill="#230000"/>
<rect x="553.00" y="293.30" width="2.00" height="30.00" fill="#290000"/>
<rect x="555.00" y="294.30" width="3.00" height="29.00" fill="#240000"/>
<rect x="558.00" y="292.80" width="3.00" height="30.50" fill="#4f0000"/>
<rect x="561.00" y="293.30" width="2.00" height="30.00" fill="#3b0000"/>
<rect x="563.00" y="293.30" width="2.00" height="30.00" fill="#3b0000"/>
<rect x="565.00" y="293.80" width="1.00" height="29.50" fill="#390000"/>
<rect x="566.00" y="293.80" width="2.00" height="29.50" fill="#300000"/>
<rect x="568.00" y="293.30" width="1.00" height="30.00" fill="#220000"/>
<rect x="569.00" y="293.30" width="2.00" height="30.00" fill="#290000"/>
<rect x="571.00" y="293.30" width="1.00" height="30.00" fill="#2a0000"/>
<rect x="572.00" y="293.30" width="3.00" height="30.00" fill="#300000"/>
<rect x="575.00" y="293.80" width="3.00" height="29.50" fill="#330000"/>
<rect x="578.00" y="293.80" width="1.00" height="29.50" fill="#240000"/>
<rect x="579.00" y="293.30" width="1.00" height="30.00" fill="#320000"/>
<rect x="580.00" y="293.30" width="3.00" height="30.00" fill="#300000"/>
<rect x="583.00" y="293.30" width="2.00" height="30.00" fill="#220000"/>
<rect x="585.00" y="293.30" width="3.00" height="30.00" fill="#290000"/>
<rect x="588.00" y="292.80" width="2.00" height="30.50" fill="#2b0000"/>
<rect x="590.00" y="292.80" width="3.00" height="30.50" fill="#250000"/>
<rect x="593.00" y="293.80" width="2.00" height="29.50" fill="#290000"/>
<rect x="595.00" y="292.80" width="3.00" height="30.50" fill="#340000"/>
<rect x="598.00" y="293.80" width="1.00" height="29.50" fill="#340000"/>
<rect x="599.00" y="293.30" width="1.00" height="30.00" fill="#350000"/>
<rect x="600.00" y="293.30" width="2.00" height="30.00" fill="#270000"/>
<rect x="602.00" y="294.30" width="3.00" height="29.00" fill="#2c0000"/>
<rect x="605.00" y="293.30" width="3.00" height="30.00" fill="#2d0000"/>
<rect x="608.00" y="293.30" width="2.00" height="30.00" fill="#220000"/>
<rect x="610.00" y="292.80" width="3.00" height="30.50" fill="#360000"/>
<rect x="613.00" y="292.80" width="1.00" height="30.50" fill="#2f0000"/>
<rect x="614.00" y="293.30" width="2.00" height="30.00" fill="#260000"/>
<rect x="616.00" y="293.30" width="2.00" height="30.00" fill="#230000"/>
<rect x="618.00" y="293.30" width="2.00" height="30.00" fill="#2d0000"/>
<rect x="620.00" y="292.80" width="3.00" height="30.50" fill="#280000"/>
<rect x="623.00" y="294.30" width="2.00" height="29.00" fill="#2d0000"/>
</g>
<defs><linearGradient id="glwcfade" x1="0" y1="0" x2="0" y2="1"><stop offset="0" stop-color="rgba(0,0,0,0)"/><stop offset="0.6" stop-color="rgba(0,0,0,0.08)"/><stop offset="1" stop-color="rgba(0,0,0,0.25)"/></linearGradient></defs>
<rect x="437.00" y="290.00" width="188.00" height="34.00" fill="url(#glwcfade)"/>
<defs><linearGradient id="glwcb" x1="0" y1="0" x2="0" y2="1"><stop offset="0" stop-color="rgba(140,0,0,0)"/><stop offset="1" stop-color="rgba(140,0,0,0.22)"/></linearGradient></defs>
<rect x="562.00" y="310.00" width="62.00" height="13.30" fill="url(#glwcb)"/>
<rect x="431.00" y="224.40" width="6.00" height="1.20" fill="#000"/>
<text x="430.5" y="228.0" font-size="8.4" text-anchor="end" fill="#000" stroke="#000" stroke-width="0.22">20</text>
<rect x="431.00" y="251.50" width="6.00" height="1.20" fill="#000"/>
<text x="430.5" y="255.1" font-size="8.4" text-anchor="end" fill="#000" stroke="#000" stroke-width="0.22">15</text>
<rect x="431.00" y="278.60" width="6.00" height="1.20" fill="#000"/>
<text x="430.5" y="282.2" font-size="8.4" text-anchor="end" fill="#000" stroke="#000" stroke-width="0.22">10</text>
<rect x="431.00" y="305.70" width="6.00" height="1.20" fill="#000"/>
<text x="430.5" y="309.3" font-size="8.4" text-anchor="end" fill="#000" stroke="#000" stroke-width="0.22">5</text>
<rect x="431.00" y="199.80" width="6.00" height="1.20" fill="#000"/>
<text x="430.5" y="203.4" font-size="8.4" text-anchor="end" fill="#000" stroke="#000" stroke-width="0.22">25</text>
<rect x="431.00" y="330.70" width="6.00" height="1.20" fill="#000"/>
<text x="430.5" y="331.0" font-size="8.4" text-anchor="end" fill="#000" stroke="#000" stroke-width="0.22">0</text>
<rect x="437.00" y="331.00" width="1.30" height="10.00" fill="#000"/>
<text x="432.4" y="350.6" font-size="8.6" text-anchor="start" fill="#000" stroke="#000" stroke-width="0.22" textLength="22.8" lengthAdjust="spacingAndGlyphs">21:40</text>
<rect x="462.17" y="331.00" width="1.30" height="5.50" fill="#000"/>
<rect x="487.33" y="331.00" width="1.30" height="10.00" fill="#000"/>
<text x="482.7" y="350.6" font-size="8.6" text-anchor="start" fill="#000" stroke="#000" stroke-width="0.22" textLength="22.8" lengthAdjust="spacingAndGlyphs">22:00</text>
<rect x="512.50" y="331.00" width="1.30" height="5.50" fill="#000"/>
<rect x="537.67" y="331.00" width="1.30" height="10.00" fill="#000"/>
<text x="533.1" y="350.6" font-size="8.6" text-anchor="start" fill="#000" stroke="#000" stroke-width="0.22" textLength="22.8" lengthAdjust="spacingAndGlyphs">22:20</text>
<rect x="562.83" y="331.00" width="1.30" height="5.50" fill="#000"/>
<rect x="588.00" y="331.00" width="1.30" height="10.00" fill="#000"/>
<text x="583.4" y="350.6" font-size="8.6" text-anchor="start" fill="#000" stroke="#000" stroke-width="0.22" textLength="22.8" lengthAdjust="spacingAndGlyphs">22:40</text>
<rect x="613.17" y="331.00" width="1.30" height="5.50" fill="#000"/>
<rect x="638.33" y="331.00" width="1.30" height="10.00" fill="#000"/>
<text x="633.7" y="350.6" font-size="8.6" text-anchor="start" fill="#000" stroke="#000" stroke-width="0.22" textLength="22.8" lengthAdjust="spacingAndGlyphs">23:00</text>
<rect x="663.50" y="331.00" width="1.30" height="5.50" fill="#000"/>
<rect x="688.67" y="331.00" width="1.30" height="10.00" fill="#000"/>
<text x="684.1" y="350.6" font-size="8.6" text-anchor="start" fill="#000" stroke="#000" stroke-width="0.22" textLength="22.8" lengthAdjust="spacingAndGlyphs">23:20</text>
<rect x="713.83" y="331.00" width="1.30" height="5.50" fill="#000"/>
<rect x="738.00" y="331.00" width="1.30" height="10.00" fill="#000"/>
<text x="733.4" y="350.6" font-size="8.6" text-anchor="start" fill="#000" stroke="#000" stroke-width="0.22" textLength="22.8" lengthAdjust="spacingAndGlyphs">23:40</text>
<defs><linearGradient id="glwc" x1="0" y1="0" x2="0" y2="1"><stop offset="0" stop-color="#ff0000"/><stop offset="1" stop-color="#000000"/></linearGradient></defs>
<rect x="742.00" y="198.00" width="6.50" height="137.00" fill="url(#glwc)"/>
<rect x="749.00" y="199.80" width="6.50" height="1.20" fill="#000"/>
<text x="755.5" y="203.4" font-size="8.4" text-anchor="start" fill="#000" stroke="#000" stroke-width="0.22">0.2</text>
<rect x="749.00" y="265.70" width="6.50" height="1.20" fill="#000"/>
<text x="755.5" y="269.3" font-size="8.4" text-anchor="start" fill="#000" stroke="#000" stroke-width="0.22">0.1</text>
<rect x="749.00" y="331.60" width="6.50" height="1.20" fill="#000"/>
<text x="755.5" y="332.5" font-size="8.4" text-anchor="start" fill="#000" stroke="#000" stroke-width="0.22">0.0</text>
<text x="402.2" y="373.5" font-size="9.4" text-anchor="start" fill="#000" stroke="#000" stroke-width="0.22" textLength="80.0" lengthAdjust="spacingAndGlyphs">Alt (1000ft MSL)</text>
<text x="732.2" y="373.3" font-size="9.4" text-anchor="start" fill="#000" stroke="#000" stroke-width="0.22" textLength="40.8" lengthAdjust="spacingAndGlyphs">Temp(K)</text>
<rect x="437.00" y="375.00" width="303.00" height="1.00" fill="#ffffff"/>
<rect x="739.00" y="375.00" width="1.00" height="134.00" fill="#ffffff"/>
<rect x="437.00" y="376.00" width="302.00" height="133.00" fill="#000"/>
<defs><linearGradient id="gtmp" x1="0" y1="0" x2="0" y2="1"><stop offset="0" stop-color="#0018ff"/><stop offset="0.2" stop-color="#0050ff"/><stop offset="0.38" stop-color="#00c0ff"/><stop offset="0.48" stop-color="#00f8f8"/><stop offset="0.62" stop-color="#50ffa8"/><stop offset="0.78" stop-color="#c8ff30"/><stop offset="0.87" stop-color="#ffff00"/><stop offset="0.95" stop-color="#ffa000"/><stop offset="1" stop-color="#ff6a00"/></linearGradient></defs>
<rect x="437.00" y="377.50" width="189.00" height="127.00" fill="url(#gtmp)"/>
<defs><clipPath id="cptmp"><rect x="437" y="377.5" width="189" height="127"/></clipPath></defs>
<g filter="url(#fbv)" clip-path="url(#cptmp)">
<rect x="503.00" y="377.50" width="1.00" height="127.00" fill="rgba(0,0,0,0.014)"/>
<rect x="603.00" y="377.50" width="1.00" height="127.00" fill="rgba(255,255,255,0.022)"/>
<rect x="601.00" y="377.50" width="2.00" height="127.00" fill="rgba(255,255,255,0.037)"/>
<rect x="491.00" y="377.50" width="1.00" height="127.00" fill="rgba(255,255,255,0.037)"/>
<rect x="612.00" y="377.50" width="1.00" height="127.00" fill="rgba(255,255,255,0.033)"/>
<rect x="474.00" y="377.50" width="1.00" height="127.00" fill="rgba(0,0,0,0.011)"/>
<rect x="552.00" y="377.50" width="1.00" height="127.00" fill="rgba(0,0,0,0.022)"/>
<rect x="528.00" y="377.50" width="2.00" height="127.00" fill="rgba(255,255,255,0.040)"/>
<rect x="581.00" y="377.50" width="1.00" height="127.00" fill="rgba(0,0,0,0.027)"/>
<rect x="600.00" y="377.50" width="2.00" height="127.00" fill="rgba(255,255,255,0.024)"/>
<rect x="599.00" y="377.50" width="2.00" height="127.00" fill="rgba(0,0,0,0.027)"/>
<rect x="593.00" y="377.50" width="2.00" height="127.00" fill="rgba(255,255,255,0.037)"/>
<rect x="623.00" y="377.50" width="1.00" height="127.00" fill="rgba(255,255,255,0.028)"/>
<rect x="482.00" y="377.50" width="1.00" height="127.00" fill="rgba(255,255,255,0.031)"/>
<rect x="504.00" y="377.50" width="1.00" height="127.00" fill="rgba(255,255,255,0.033)"/>
<rect x="584.00" y="377.50" width="1.00" height="127.00" fill="rgba(255,255,255,0.030)"/>
<rect x="486.00" y="377.50" width="1.00" height="127.00" fill="rgba(255,255,255,0.036)"/>
<rect x="603.00" y="377.50" width="1.00" height="127.00" fill="rgba(255,255,255,0.034)"/>
<rect x="621.00" y="377.50" width="1.00" height="127.00" fill="rgba(0,0,0,0.017)"/>
<rect x="473.00" y="377.50" width="1.00" height="127.00" fill="rgba(0,0,0,0.018)"/>
<rect x="600.00" y="377.50" width="2.00" height="127.00" fill="rgba(0,0,0,0.014)"/>
<rect x="501.00" y="377.50" width="1.00" height="127.00" fill="rgba(0,0,0,0.025)"/>
<rect x="617.00" y="377.50" width="2.00" height="127.00" fill="rgba(255,255,255,0.041)"/>
<rect x="605.00" y="377.50" width="2.00" height="127.00" fill="rgba(0,0,0,0.011)"/>
<rect x="497.00" y="377.50" width="2.00" height="127.00" fill="rgba(255,255,255,0.037)"/>
<rect x="447.00" y="377.50" width="1.00" height="127.00" fill="rgba(0,0,0,0.019)"/>
<rect x="586.00" y="377.50" width="1.00" height="127.00" fill="rgba(255,255,255,0.037)"/>
<rect x="486.00" y="377.50" width="1.00" height="127.00" fill="rgba(0,0,0,0.012)"/>
<rect x="494.00" y="377.50" width="2.00" height="127.00" fill="rgba(255,255,255,0.020)"/>
<rect x="579.00" y="377.50" width="1.00" height="127.00" fill="rgba(0,0,0,0.024)"/>
<rect x="524.00" y="377.50" width="1.00" height="127.00" fill="rgba(0,0,0,0.021)"/>
<rect x="516.00" y="377.50" width="1.00" height="127.00" fill="rgba(255,255,255,0.019)"/>
<rect x="581.00" y="377.50" width="1.00" height="127.00" fill="rgba(255,255,255,0.033)"/>
<rect x="570.00" y="377.50" width="1.00" height="127.00" fill="rgba(0,0,0,0.016)"/>
<rect x="518.00" y="377.50" width="2.00" height="127.00" fill="rgba(255,255,255,0.025)"/>
<rect x="569.00" y="377.50" width="1.00" height="127.00" fill="rgba(255,255,255,0.040)"/>
<rect x="512.00" y="377.50" width="2.00" height="127.00" fill="rgba(255,255,255,0.039)"/>
<rect x="477.00" y="377.50" width="2.00" height="127.00" fill="rgba(255,255,255,0.037)"/>
<rect x="492.00" y="377.50" width="1.00" height="127.00" fill="rgba(0,0,0,0.014)"/>
<rect x="499.00" y="377.50" width="2.00" height="127.00" fill="rgba(255,255,255,0.033)"/>
<rect x="526.00" y="377.50" width="1.00" height="127.00" fill="rgba(255,255,255,0.028)"/>
<rect x="459.00" y="377.50" width="1.00" height="127.00" fill="rgba(255,255,255,0.017)"/>
<rect x="604.00" y="377.50" width="1.00" height="127.00" fill="rgba(255,255,255,0.038)"/>
<rect x="578.00" y="377.50" width="2.00" height="127.00" fill="rgba(255,255,255,0.027)"/>
<rect x="548.00" y="377.50" width="1.00" height="127.00" fill="rgba(255,255,255,0.044)"/>
<rect x="465.00" y="377.50" width="1.00" height="127.00" fill="rgba(255,255,255,0.026)"/>
<rect x="514.00" y="377.50" width="1.00" height="127.00" fill="rgba(255,255,255,0.033)"/>
<rect x="469.00" y="377.50" width="2.00" height="127.00" fill="rgba(255,255,255,0.018)"/>
<rect x="586.00" y="377.50" width="2.00" height="127.00" fill="rgba(255,255,255,0.045)"/>
<rect x="512.00" y="377.50" width="1.00" height="127.00" fill="rgba(0,0,0,0.011)"/>
<rect x="479.00" y="377.50" width="1.00" height="127.00" fill="rgba(0,0,0,0.025)"/>
<rect x="438.00" y="377.50" width="2.00" height="127.00" fill="rgba(0,0,0,0.025)"/>
<rect x="475.00" y="377.50" width="1.00" height="127.00" fill="rgba(0,0,0,0.011)"/>
<rect x="525.00" y="377.50" width="1.00" height="127.00" fill="rgba(0,0,0,0.014)"/>
<rect x="620.00" y="377.50" width="1.00" height="127.00" fill="rgba(0,0,0,0.013)"/>
<rect x="570.00" y="377.50" width="1.00" height="127.00" fill="rgba(0,0,0,0.023)"/>
<rect x="583.00" y="377.50" width="2.00" height="127.00" fill="rgba(255,255,255,0.027)"/>
<rect x="450.00" y="377.50" width="2.00" height="127.00" fill="rgba(255,255,255,0.018)"/>
<rect x="531.00" y="377.50" width="2.00" height="127.00" fill="rgba(255,255,255,0.031)"/>
<rect x="513.00" y="377.50" width="1.00" height="127.00" fill="rgba(255,255,255,0.023)"/>
<rect x="479.00" y="377.50" width="2.00" height="127.00" fill="rgba(255,255,255,0.037)"/>
<rect x="506.00" y="377.50" width="2.00" height="127.00" fill="rgba(0,0,0,0.025)"/>
<rect x="545.00" y="377.50" width="2.00" height="127.00" fill="rgba(0,0,0,0.012)"/>
<rect x="620.00" y="377.50" width="1.00" height="127.00" fill="rgba(0,0,0,0.022)"/>
<rect x="465.00" y="377.50" width="1.00" height="127.00" fill="rgba(255,255,255,0.018)"/>
<rect x="557.00" y="377.50" width="1.00" height="127.00" fill="rgba(255,255,255,0.027)"/>
<rect x="552.00" y="377.50" width="2.00" height="127.00" fill="rgba(0,0,0,0.014)"/>
<rect x="503.00" y="377.50" width="1.00" height="127.00" fill="rgba(255,255,255,0.023)"/>
<rect x="532.00" y="377.50" width="1.00" height="127.00" fill="rgba(0,0,0,0.016)"/>
<rect x="541.00" y="377.50" width="2.00" height="127.00" fill="rgba(255,255,255,0.023)"/>
<rect x="555.00" y="377.50" width="1.00" height="127.00" fill="rgba(255,255,255,0.021)"/>
<rect x="485.00" y="377.50" width="1.00" height="127.00" fill="rgba(0,0,0,0.010)"/>
<rect x="565.00" y="377.50" width="2.00" height="127.00" fill="rgba(255,255,255,0.020)"/>
<rect x="471.00" y="377.50" width="1.00" height="127.00" fill="rgba(0,0,0,0.015)"/>
<rect x="583.00" y="377.50" width="1.00" height="127.00" fill="rgba(0,0,0,0.018)"/>
<rect x="617.00" y="377.50" width="1.00" height="127.00" fill="rgba(0,0,0,0.022)"/>
<rect x="443.00" y="377.50" width="2.00" height="127.00" fill="rgba(255,255,255,0.044)"/>
<rect x="473.00" y="377.50" width="2.00" height="127.00" fill="rgba(0,0,0,0.014)"/>
<rect x="450.00" y="377.50" width="1.00" height="127.00" fill="rgba(255,255,255,0.037)"/>
<rect x="494.00" y="377.50" width="1.00" height="127.00" fill="rgba(0,0,0,0.018)"/>
<rect x="517.00" y="377.50" width="1.00" height="127.00" fill="rgba(255,255,255,0.031)"/>
<rect x="524.00" y="377.50" width="2.00" height="127.00" fill="rgba(0,0,0,0.021)"/>
<rect x="616.00" y="377.50" width="2.00" height="127.00" fill="rgba(255,255,255,0.045)"/>
<rect x="440.00" y="377.50" width="1.00" height="127.00" fill="rgba(0,0,0,0.011)"/>
<rect x="527.00" y="377.50" width="2.00" height="127.00" fill="rgba(0,0,0,0.024)"/>
<rect x="495.00" y="377.50" width="1.00" height="127.00" fill="rgba(0,0,0,0.021)"/>
<rect x="619.00" y="377.50" width="2.00" height="127.00" fill="rgba(0,0,0,0.011)"/>
<rect x="463.00" y="377.50" width="2.00" height="127.00" fill="rgba(0,0,0,0.010)"/>
<rect x="567.00" y="377.50" width="1.00" height="127.00" fill="rgba(255,255,255,0.016)"/>
<rect x="534.00" y="377.50" width="2.00" height="127.00" fill="rgba(0,0,0,0.019)"/>
<rect x="568.00" y="377.50" width="1.00" height="127.00" fill="rgba(0,0,0,0.016)"/>
<rect x="571.00" y="377.50" width="2.00" height="127.00" fill="rgba(255,255,255,0.044)"/>
<rect x="468.00" y="377.50" width="1.00" height="127.00" fill="rgba(0,0,0,0.025)"/>
<rect x="585.00" y="377.50" width="1.00" height="127.00" fill="rgba(255,255,255,0.017)"/>
<rect x="513.00" y="377.50" width="2.00" height="127.00" fill="rgba(0,0,0,0.024)"/>
<rect x="551.00" y="377.50" width="2.00" height="127.00" fill="rgba(255,255,255,0.027)"/>
<rect x="452.00" y="377.50" width="1.00" height="127.00" fill="rgba(255,255,255,0.017)"/>
<rect x="573.00" y="377.50" width="2.00" height="127.00" fill="rgba(255,255,255,0.025)"/>
<rect x="490.00" y="377.50" width="1.00" height="127.00" fill="rgba(0,0,0,0.017)"/>
<rect x="489.00" y="377.50" width="2.00" height="127.00" fill="rgba(0,0,0,0.020)"/>
<rect x="465.00" y="377.50" width="2.00" height="127.00" fill="rgba(0,0,0,0.021)"/>
<rect x="535.00" y="377.50" width="1.00" height="127.00" fill="rgba(255,255,255,0.034)"/>
<rect x="477.00" y="377.50" width="1.00" height="127.00" fill="rgba(255,255,255,0.036)"/>
<rect x="548.00" y="377.50" width="2.00" height="127.00" fill="rgba(0,0,0,0.019)"/>
<rect x="618.00" y="377.50" width="1.00" height="127.00" fill="rgba(255,255,255,0.027)"/>
<rect x="568.00" y="377.50" width="2.00" height="127.00" fill="rgba(255,255,255,0.020)"/>
<rect x="450.00" y="377.50" width="2.00" height="127.00" fill="rgba(0,0,0,0.018)"/>
<rect x="481.00" y="377.50" width="1.00" height="127.00" fill="rgba(0,0,0,0.011)"/>
<rect x="544.00" y="377.50" width="2.00" height="127.00" fill="rgba(255,255,255,0.024)"/>
<rect x="620.00" y="377.50" width="1.00" height="127.00" fill="rgba(0,0,0,0.019)"/>
<rect x="620.00" y="377.50" width="1.00" height="127.00" fill="rgba(0,0,0,0.013)"/>
<rect x="478.00" y="377.50" width="1.00" height="127.00" fill="rgba(255,255,255,0.016)"/>
<rect x="475.00" y="377.50" width="1.00" height="127.00" fill="rgba(255,255,255,0.039)"/>
<rect x="462.00" y="377.50" width="1.00" height="127.00" fill="rgba(255,255,255,0.018)"/>
<rect x="448.00" y="377.50" width="1.00" height="127.00" fill="rgba(0,0,0,0.022)"/>
<rect x="472.00" y="377.50" width="1.00" height="127.00" fill="rgba(255,255,255,0.036)"/>
<rect x="530.00" y="377.50" width="1.00" height="127.00" fill="rgba(0,0,0,0.011)"/>
<rect x="459.00" y="377.50" width="1.00" height="127.00" fill="rgba(0,0,0,0.022)"/>
<rect x="551.00" y="377.50" width="2.00" height="127.00" fill="rgba(0,0,0,0.009)"/>
<rect x="437.00" y="377.50" width="1.00" height="127.00" fill="rgba(255,255,255,0.034)"/>
<rect x="475.00" y="377.50" width="1.00" height="127.00" fill="rgba(255,255,255,0.028)"/>
<rect x="529.00" y="377.50" width="1.00" height="127.00" fill="rgba(255,255,255,0.025)"/>
<rect x="464.00" y="377.50" width="1.00" height="127.00" fill="rgba(255,255,255,0.019)"/>
<rect x="598.00" y="377.50" width="2.00" height="127.00" fill="rgba(255,255,255,0.028)"/>
<rect x="547.00" y="377.50" width="2.00" height="127.00" fill="rgba(255,255,255,0.038)"/>
<rect x="490.00" y="377.50" width="1.00" height="127.00" fill="rgba(0,0,0,0.024)"/>
<rect x="442.00" y="377.50" width="1.00" height="127.00" fill="rgba(255,255,255,0.027)"/>
<rect x="539.00" y="377.50" width="1.00" height="127.00" fill="rgba(0,0,0,0.014)"/>
<rect x="480.00" y="377.50" width="2.00" height="127.00" fill="rgba(0,0,0,0.024)"/>
<rect x="449.00" y="377.50" width="2.00" height="127.00" fill="rgba(255,255,255,0.038)"/>
<rect x="568.00" y="377.50" width="2.00" height="127.00" fill="rgba(0,0,0,0.022)"/>
<rect x="448.00" y="377.50" width="1.00" height="127.00" fill="rgba(255,255,255,0.032)"/>
<rect x="548.00" y="377.50" width="1.00" height="127.00" fill="rgba(255,255,255,0.016)"/>
<rect x="447.00" y="377.50" width="1.00" height="127.00" fill="rgba(255,255,255,0.038)"/>
<rect x="539.00" y="377.50" width="1.00" height="127.00" fill="rgba(255,255,255,0.040)"/>
<rect x="547.00" y="377.50" width="1.00" height="127.00" fill="rgba(255,255,255,0.038)"/>
<rect x="540.00" y="377.50" width="1.00" height="127.00" fill="rgba(0,0,0,0.013)"/>
<rect x="581.00" y="377.50" width="1.00" height="127.00" fill="rgba(255,255,255,0.041)"/>
<rect x="615.00" y="377.50" width="2.00" height="127.00" fill="rgba(0,0,0,0.009)"/>
<rect x="593.00" y="377.50" width="2.00" height="127.00" fill="rgba(0,0,0,0.016)"/>
<rect x="470.00" y="377.50" width="1.00" height="127.00" fill="rgba(255,255,255,0.041)"/>
<rect x="562.00" y="377.50" width="2.00" height="127.00" fill="rgba(255,255,255,0.033)"/>
<rect x="568.00" y="377.50" width="2.00" height="127.00" fill="rgba(255,255,255,0.036)"/>
<rect x="562.00" y="377.50" width="1.00" height="127.00" fill="rgba(255,255,255,0.034)"/>
<rect x="444.00" y="377.50" width="1.00" height="127.00" fill="rgba(0,0,0,0.017)"/>
<rect x="556.00" y="377.50" width="1.00" height="127.00" fill="rgba(255,255,255,0.029)"/>
<rect x="488.00" y="377.50" width="2.00" height="127.00" fill="rgba(0,0,0,0.014)"/>
<rect x="475.00" y="377.50" width="2.00" height="127.00" fill="rgba(0,0,0,0.012)"/>
<rect x="441.00" y="377.50" width="1.00" height="127.00" fill="rgba(255,255,255,0.020)"/>
<rect x="615.00" y="377.50" width="1.00" height="127.00" fill="rgba(255,255,255,0.029)"/>
<rect x="437.00" y="377.50" width="1.00" height="127.00" fill="rgba(255,255,255,0.033)"/>
<rect x="466.00" y="377.50" width="1.00" height="127.00" fill="rgba(0,0,0,0.010)"/>
<rect x="571.00" y="377.50" width="1.00" height="127.00" fill="rgba(255,255,255,0.036)"/>
<rect x="624.00" y="377.50" width="2.00" height="127.00" fill="rgba(0,0,0,0.009)"/>
<rect x="552.00" y="377.50" width="1.00" height="127.00" fill="rgba(0,0,0,0.021)"/>
<rect x="551.00" y="377.50" width="1.00" height="127.00" fill="rgba(0,0,0,0.020)"/>
<rect x="472.00" y="377.50" width="2.00" height="127.00" fill="rgba(0,0,0,0.024)"/>
<rect x="619.00" y="377.50" width="2.00" height="127.00" fill="rgba(0,0,0,0.023)"/>
<rect x="621.00" y="377.50" width="1.00" height="127.00" fill="rgba(0,0,0,0.017)"/>
<rect x="595.00" y="377.50" width="1.00" height="127.00" fill="rgba(0,0,0,0.016)"/>
</g>
<rect x="437.00" y="503.50" width="189.00" height="1.50" fill="#60b020"/>
<rect x="437.00" y="376.00" width="189.00" height="1.50" fill="#000"/>
<rect x="437.00" y="466.70" width="9.10" height="1.30" fill="#b83a10"/>
<rect x="445.60" y="467.50" width="3.00" height="1.30" fill="#b83a10"/>
<rect x="447.10" y="468.70" width="3.00" height="1.30" fill="#b83a10"/>
<rect x="449.60" y="468.50" width="4.60" height="1.30" fill="#b83a10"/>
<rect x="453.10" y="465.70" width="3.60" height="1.30" fill="#b83a10"/>
<rect x="454.70" y="467.70" width="4.00" height="1.30" fill="#b83a10"/>
<rect x="457.70" y="465.70" width="4.00" height="1.30" fill="#b83a10"/>
<rect x="460.70" y="467.70" width="5.00" height="1.30" fill="#b83a10"/>
<rect x="466.80" y="464.00" width="3.50" height="1.30" fill="#b83a10"/>
<rect x="469.30" y="465.70" width="3.50" height="1.30" fill="#b83a10"/>
<rect x="471.80" y="467.70" width="3.50" height="1.30" fill="#b83a10"/>
<rect x="473.80" y="464.70" width="3.50" height="1.30" fill="#b83a10"/>
<rect x="476.80" y="466.70" width="3.60" height="1.30" fill="#b83a10"/>
<rect x="481.90" y="462.50" width="3.50" height="1.30" fill="#b83a10"/>
<rect x="484.40" y="466.70" width="6.00" height="1.30" fill="#b83a10"/>
<rect x="488.40" y="464.00" width="4.10" height="1.30" fill="#b83a10"/>
<rect x="491.50" y="462.00" width="5.00" height="1.30" fill="#b83a10"/>
<rect x="497.50" y="467.50" width="4.00" height="1.30" fill="#b83a10"/>
<rect x="500.50" y="466.70" width="5.10" height="1.30" fill="#b83a10"/>
<rect x="503.50" y="464.00" width="3.10" height="1.30" fill="#b83a10"/>
<rect x="507.10" y="464.00" width="3.00" height="1.30" fill="#b83a10"/>
<rect x="509.10" y="468.70" width="4.50" height="1.30" fill="#b83a10"/>
<rect x="512.60" y="467.00" width="4.10" height="1.30" fill="#b83a10"/>
<rect x="516.70" y="464.70" width="3.00" height="1.30" fill="#b83a10"/>
<rect x="519.70" y="466.70" width="4.00" height="1.30" fill="#b83a10"/>
<rect x="523.20" y="465.70" width="4.50" height="1.30" fill="#b83a10"/>
<rect x="526.70" y="460.70" width="4.10" height="1.30" fill="#b83a10"/>
<rect x="530.30" y="468.00" width="4.20" height="1.30" fill="#b83a10"/>
<rect x="535.00" y="460.70" width="3.00" height="1.30" fill="#b83a10"/>
<rect x="537.00" y="464.00" width="3.00" height="1.30" fill="#b83a10"/>
<rect x="540.00" y="465.70" width="3.10" height="1.30" fill="#b83a10"/>
<rect x="542.10" y="464.00" width="3.00" height="1.30" fill="#b83a10"/>
<rect x="545.10" y="465.70" width="4.60" height="1.30" fill="#b83a10"/>
<rect x="550.20" y="462.50" width="3.00" height="1.30" fill="#b83a10"/>
<rect x="552.20" y="465.70" width="3.00" height="1.30" fill="#b83a10"/>
<rect x="555.20" y="464.00" width="3.50" height="1.30" fill="#b83a10"/>
<rect x="557.70" y="464.70" width="5.10" height="1.30" fill="#b83a10"/>
<rect x="562.30" y="467.50" width="3.00" height="1.30" fill="#b83a10"/>
<rect x="564.80" y="464.70" width="5.00" height="1.30" fill="#b83a10"/>
<rect x="569.80" y="466.70" width="3.50" height="1.30" fill="#b83a10"/>
<rect x="571.80" y="464.70" width="3.10" height="1.30" fill="#b83a10"/>
<rect x="574.90" y="469.70" width="3.00" height="1.30" fill="#b83a10"/>
<rect x="576.90" y="466.70" width="3.50" height="1.30" fill="#b83a10"/>
<rect x="579.90" y="465.70" width="5.00" height="1.30" fill="#b83a10"/>
<rect x="585.00" y="464.70" width="4.50" height="1.30" fill="#b83a10"/>
<rect x="589.50" y="464.00" width="3.50" height="1.30" fill="#b83a10"/>
<rect x="592.50" y="462.50" width="3.50" height="1.30" fill="#b83a10"/>
<rect x="595.00" y="464.70" width="3.50" height="1.30" fill="#b83a10"/>
<rect x="598.00" y="464.00" width="3.60" height="1.30" fill="#b83a10"/>
<rect x="600.60" y="464.70" width="2.50" height="1.30" fill="#b83a10"/>
<rect x="602.60" y="466.70" width="3.50" height="1.30" fill="#b83a10"/>
<rect x="605.10" y="464.70" width="3.50" height="1.30" fill="#b83a10"/>
<rect x="607.60" y="464.00" width="5.10" height="1.30" fill="#b83a10"/>
<rect x="613.20" y="465.70" width="12.60" height="1.30" fill="#b83a10"/>
<rect x="431.00" y="377.70" width="6.00" height="1.20" fill="#000"/>
<text x="430.5" y="381.3" font-size="8.4" text-anchor="end" fill="#000" stroke="#000" stroke-width="0.22">34</text>
<rect x="431.00" y="410.20" width="6.00" height="1.20" fill="#000"/>
<text x="430.5" y="413.8" font-size="8.4" text-anchor="end" fill="#000" stroke="#000" stroke-width="0.22">25.5</text>
<rect x="431.00" y="443.80" width="6.00" height="1.20" fill="#000"/>
<text x="430.5" y="447.4" font-size="8.4" text-anchor="end" fill="#000" stroke="#000" stroke-width="0.22">17</text>
<rect x="431.00" y="477.20" width="6.00" height="1.20" fill="#000"/>
<text x="430.5" y="480.8" font-size="8.4" text-anchor="end" fill="#000" stroke="#000" stroke-width="0.22">8.5</text>
<rect x="431.00" y="509.40" width="6.00" height="1.20" fill="#000"/>
<text x="430.5" y="510.0" font-size="8.4" text-anchor="end" fill="#000" stroke="#000" stroke-width="0.22">0</text>
<rect x="437.00" y="509.00" width="1.30" height="10.00" fill="#000"/>
<text x="432.4" y="528.6" font-size="8.6" text-anchor="start" fill="#000" stroke="#000" stroke-width="0.22" textLength="22.8" lengthAdjust="spacingAndGlyphs">21:40</text>
<rect x="462.17" y="509.00" width="1.30" height="5.50" fill="#000"/>
<rect x="487.33" y="509.00" width="1.30" height="10.00" fill="#000"/>
<text x="482.7" y="528.6" font-size="8.6" text-anchor="start" fill="#000" stroke="#000" stroke-width="0.22" textLength="22.8" lengthAdjust="spacingAndGlyphs">22:00</text>
<rect x="512.50" y="509.00" width="1.30" height="5.50" fill="#000"/>
<rect x="537.67" y="509.00" width="1.30" height="10.00" fill="#000"/>
<text x="533.1" y="528.6" font-size="8.6" text-anchor="start" fill="#000" stroke="#000" stroke-width="0.22" textLength="22.8" lengthAdjust="spacingAndGlyphs">22:20</text>
<rect x="562.83" y="509.00" width="1.30" height="5.50" fill="#000"/>
<rect x="588.00" y="509.00" width="1.30" height="10.00" fill="#000"/>
<text x="583.4" y="528.6" font-size="8.6" text-anchor="start" fill="#000" stroke="#000" stroke-width="0.22" textLength="22.8" lengthAdjust="spacingAndGlyphs">22:40</text>
<rect x="613.17" y="509.00" width="1.30" height="5.50" fill="#000"/>
<rect x="638.33" y="509.00" width="1.30" height="10.00" fill="#000"/>
<text x="633.7" y="528.6" font-size="8.6" text-anchor="start" fill="#000" stroke="#000" stroke-width="0.22" textLength="22.8" lengthAdjust="spacingAndGlyphs">23:00</text>
<rect x="663.50" y="509.00" width="1.30" height="5.50" fill="#000"/>
<rect x="688.67" y="509.00" width="1.30" height="10.00" fill="#000"/>
<text x="684.1" y="528.6" font-size="8.6" text-anchor="start" fill="#000" stroke="#000" stroke-width="0.22" textLength="22.8" lengthAdjust="spacingAndGlyphs">23:20</text>
<rect x="713.83" y="509.00" width="1.30" height="5.50" fill="#000"/>
<rect x="738.00" y="509.00" width="1.30" height="10.00" fill="#000"/>
<text x="733.4" y="528.6" font-size="8.6" text-anchor="start" fill="#000" stroke="#000" stroke-width="0.22" textLength="22.8" lengthAdjust="spacingAndGlyphs">23:40</text>
<rect x="742.00" y="376.00" width="6.50" height="137.00" fill="url(#gjet)"/>
<rect x="749.00" y="377.50" width="6.50" height="1.20" fill="#000"/>
<text x="755.5" y="381.1" font-size="8.4" text-anchor="start" fill="#000" stroke="#000" stroke-width="0.22">290</text>
<rect x="749.00" y="409.80" width="6.50" height="1.20" fill="#000"/>
<text x="755.5" y="413.4" font-size="8.4" text-anchor="start" fill="#000" stroke="#000" stroke-width="0.22">270</text>
<rect x="749.00" y="443.40" width="6.50" height="1.20" fill="#000"/>
<text x="755.5" y="447.0" font-size="8.4" text-anchor="start" fill="#000" stroke="#000" stroke-width="0.22">250</text>
<rect x="749.00" y="477.80" width="6.50" height="1.20" fill="#000"/>
<text x="755.5" y="481.4" font-size="8.4" text-anchor="start" fill="#000" stroke="#000" stroke-width="0.22">230</text>
<rect x="749.00" y="509.80" width="6.50" height="1.20" fill="#000"/>
<text x="755.5" y="510.5" font-size="8.4" text-anchor="start" fill="#000" stroke="#000" stroke-width="0.22">210</text>
<text x="402.5" y="551.6" font-size="9.4" text-anchor="start" fill="#000" stroke="#000" stroke-width="0.22" textLength="17.4" lengthAdjust="spacingAndGlyphs">ILW</text>
<rect x="437.00" y="553.00" width="303.00" height="1.00" fill="#ffffff"/>
<rect x="739.00" y="553.00" width="1.00" height="134.00" fill="#ffffff"/>
<rect x="437.00" y="554.00" width="302.00" height="133.00" fill="#000"/>
<polygon points="437,687 437,679.2 439,679.2 439,677.2 442,677.2 442,665.1 445,665.1 445,675.2 454,675.2 454,674.2 457,674.2 457,677.7 459,677.7 459,676 462,676 462,674.2 465,674.2 465,675.2 470,675.2 470,678.2 472,678.2 472,677.2 477,677.2 477,677 481,677 481,679.2 485,679.2 485,680.2 492,680.2 492,681 497,681 497,674.2 502,674.2 502,678 504,678 504,675.2 507,675.2 507,672.2 512,672.2 512,679.2 520,679.2 520,674.2 527,674.2 527,667.1 530,667.1 530,673.2 533,673.2 533,680.2 535,680.2 535,679.2 537.5,679.2 537.5,682.3 540,682.3 540,684.3 545,684.3 545,683.3 547,683.3 547,681.3 549.7,681.3 549.7,682.8 551.7,682.8 551.7,681.3 554.2,681.3 554.2,680 557.2,680 557.2,671.2 564.8,671.2 564.8,667.1 567.8,667.1 567.8,671.2 570.3,671.2 570.3,675.2 572.3,675.2 572.3,673.2 574.9,673.2 574.9,674.2 578.4,674.2 578.4,677 582.9,677 582.9,679 588.5,679 588.5,680.2 593,680.2 593,679.2 596,679.2 596,681.3 598.5,681.3 598.5,683 607.6,683 607.6,680.7 610.6,680.7 610.6,676.2 613.7,676.2 613.7,675 625.8,675 625.8,687" fill="#00ff00"/>
<rect x="431.00" y="555.80" width="6.00" height="1.20" fill="#000"/>
<text x="430.5" y="559.4" font-size="8.4" text-anchor="end" fill="#000" stroke="#000" stroke-width="0.22">2</text>
<rect x="431.00" y="621.20" width="6.00" height="1.20" fill="#000"/>
<text x="430.5" y="624.8" font-size="8.4" text-anchor="end" fill="#000" stroke="#000" stroke-width="0.22">1</text>
<rect x="431.00" y="687.40" width="6.00" height="1.20" fill="#000"/>
<text x="430.5" y="687.0" font-size="8.4" text-anchor="end" fill="#000" stroke="#000" stroke-width="0.22">0</text>
<rect x="437.00" y="687.00" width="1.30" height="10.00" fill="#000"/>
<text x="432.4" y="706.6" font-size="8.6" text-anchor="start" fill="#000" stroke="#000" stroke-width="0.22" textLength="22.8" lengthAdjust="spacingAndGlyphs">21:40</text>
<rect x="462.17" y="687.00" width="1.30" height="5.50" fill="#000"/>
<rect x="487.33" y="687.00" width="1.30" height="10.00" fill="#000"/>
<text x="482.7" y="706.6" font-size="8.6" text-anchor="start" fill="#000" stroke="#000" stroke-width="0.22" textLength="22.8" lengthAdjust="spacingAndGlyphs">22:00</text>
<rect x="512.50" y="687.00" width="1.30" height="5.50" fill="#000"/>
<rect x="537.67" y="687.00" width="1.30" height="10.00" fill="#000"/>
<text x="533.1" y="706.6" font-size="8.6" text-anchor="start" fill="#000" stroke="#000" stroke-width="0.22" textLength="22.8" lengthAdjust="spacingAndGlyphs">22:20</text>
<rect x="562.83" y="687.00" width="1.30" height="5.50" fill="#000"/>
<rect x="588.00" y="687.00" width="1.30" height="10.00" fill="#000"/>
<text x="583.4" y="706.6" font-size="8.6" text-anchor="start" fill="#000" stroke="#000" stroke-width="0.22" textLength="22.8" lengthAdjust="spacingAndGlyphs">22:40</text>
<rect x="613.17" y="687.00" width="1.30" height="5.50" fill="#000"/>
<rect x="638.33" y="687.00" width="1.30" height="10.00" fill="#000"/>
<text x="633.7" y="706.6" font-size="8.6" text-anchor="start" fill="#000" stroke="#000" stroke-width="0.22" textLength="22.8" lengthAdjust="spacingAndGlyphs">23:00</text>
<rect x="663.50" y="687.00" width="1.30" height="5.50" fill="#000"/>
<rect x="688.67" y="687.00" width="1.30" height="10.00" fill="#000"/>
<text x="684.1" y="706.6" font-size="8.6" text-anchor="start" fill="#000" stroke="#000" stroke-width="0.22" textLength="22.8" lengthAdjust="spacingAndGlyphs">23:20</text>
<rect x="713.83" y="687.00" width="1.30" height="5.50" fill="#000"/>
<rect x="738.00" y="687.00" width="1.30" height="10.00" fill="#000"/>
<text x="733.4" y="706.6" font-size="8.6" text-anchor="start" fill="#000" stroke="#000" stroke-width="0.22" textLength="22.8" lengthAdjust="spacingAndGlyphs">23:40</text>
<text x="814.5" y="48.6" font-size="20" font-weight="bold" text-anchor="start" fill="#333333" stroke="#333333" stroke-width="0.1" textLength="147.0" lengthAdjust="spacingAndGlyphs">NIRSS - Local</text>
<text x="869.6" y="94.8" font-size="10.5" font-weight="bold" text-anchor="start" fill="#333333" stroke="#333333" stroke-width="0.1" textLength="33.3" lengthAdjust="spacingAndGlyphs">Mode:</text>
<rect x="799.00" y="107.00" width="88.00" height="22.50" fill="#a00000" stroke="#8a8a8a" stroke-width="1"/>
<text x="843.0" y="121.9" font-size="10" font-weight="bold" text-anchor="middle" fill="#ffffff" stroke="#ffffff" stroke-width="0.1" textLength="53.5" lengthAdjust="spacingAndGlyphs">REALTIME</text>
<rect x="892.00" y="107.00" width="84.00" height="22.50" fill="#00a000" stroke="#8a8a8a" stroke-width="1"/>
<text x="934.0" y="121.9" font-size="10" font-weight="bold" text-anchor="middle" fill="#ffffff" stroke="#ffffff" stroke-width="0.1" textLength="48.5" lengthAdjust="spacingAndGlyphs">ARCHIVE</text>
<text x="835.4" y="150.2" font-size="10.5" font-weight="bold" text-anchor="start" fill="#333333" stroke="#333333" stroke-width="0.1" textLength="103.8" lengthAdjust="spacingAndGlyphs">Display time (UTC)</text>
<rect x="799.50" y="165.50" width="145.50" height="15.50" fill="#ffffff" stroke="#7a8a99" stroke-width="1"/>
<text x="801.7" y="176.8" font-size="10.2" font-weight="bold" text-anchor="start" fill="#000" stroke="#000" stroke-width="0.1" textLength="116.3" lengthAdjust="spacingAndGlyphs">2012-02-25 23:40:00</text>
<defs><linearGradient id="gbtn" x1="0" y1="0" x2="0" y2="1"><stop offset="0" stop-color="#fdfeff"/><stop offset="0.45" stop-color="#e6eef7"/><stop offset="1" stop-color="#bcd0e5"/></linearGradient></defs>
<rect x="951.50" y="163.50" width="23.00" height="19.50" fill="url(#gbtn)" stroke="#7a8a99" stroke-width="1"/>
<rect x="953.50" y="165.50" width="19.00" height="15.50" fill="none" stroke="#a3b8cc" stroke-width="1"/>
<text x="963.0" y="177.3" font-size="10" font-weight="bold" text-anchor="middle" fill="#222" stroke="#222" stroke-width="0.1" textLength="15.0" lengthAdjust="spacingAndGlyphs">GO</text>
<rect x="803.50" y="194.50" width="31.00" height="20.00" fill="url(#gbtn)" stroke="#7a8a99" stroke-width="1"/>
<text x="819.0" y="207.5" font-size="9" font-weight="bold" text-anchor="middle" fill="#222" stroke="#222" stroke-width="0.1" textLength="22.0" lengthAdjust="spacingAndGlyphs">&lt;&lt;&lt;</text>
<rect x="840.50" y="194.50" width="23.00" height="20.00" fill="url(#gbtn)" stroke="#7a8a99" stroke-width="1"/>
<text x="852.0" y="207.5" font-size="9" font-weight="bold" text-anchor="middle" fill="#222" stroke="#222" stroke-width="0.1" textLength="14.5" lengthAdjust="spacingAndGlyphs">&lt;&lt;</text>
<rect x="869.50" y="194.50" width="15.00" height="20.00" fill="url(#gbtn)" stroke="#7a8a99" stroke-width="1"/>
<text x="877.0" y="207.5" font-size="9" font-weight="bold" text-anchor="middle" fill="#222" stroke="#222" stroke-width="0.1" textLength="6.0" lengthAdjust="spacingAndGlyphs">&lt;</text>
<rect x="890.50" y="194.50" width="15.00" height="20.00" fill="url(#gbtn)" stroke="#7a8a99" stroke-width="1"/>
<text x="898.0" y="207.5" font-size="9" font-weight="bold" text-anchor="middle" fill="#222" stroke="#222" stroke-width="0.1" textLength="6.0" lengthAdjust="spacingAndGlyphs">&gt;</text>
<rect x="911.50" y="194.50" width="23.00" height="20.00" fill="url(#gbtn)" stroke="#7a8a99" stroke-width="1"/>
<text x="923.0" y="207.5" font-size="9" font-weight="bold" text-anchor="middle" fill="#222" stroke="#222" stroke-width="0.1" textLength="14.0" lengthAdjust="spacingAndGlyphs">&gt;&gt;</text>
<rect x="940.50" y="194.50" width="31.00" height="20.00" fill="url(#gbtn)" stroke="#7a8a99" stroke-width="1"/>
<text x="956.0" y="207.5" font-size="9" font-weight="bold" text-anchor="middle" fill="#222" stroke="#222" stroke-width="0.1" textLength="22.0" lengthAdjust="spacingAndGlyphs">&gt;&gt;&gt;</text>
<text x="809.8" y="240.7" font-size="12.5" text-anchor="start" fill="#333333" stroke="#333333" stroke-width="0.22" textLength="78.0" lengthAdjust="spacingAndGlyphs">Time zoom:</text>
<rect x="894.50" y="225.50" width="70.00" height="22.50" fill="url(#gbtn)" stroke="#7a8a99" stroke-width="1"/>
<rect x="894.50" y="225.50" width="51.00" height="22.50" fill="#eeeeee" stroke="#7a8a99" stroke-width="1"/>
<text x="897.9" y="241.5" font-size="12.5" text-anchor="start" fill="#222" stroke="#222" stroke-width="0.22" textLength="33.2" lengthAdjust="spacingAndGlyphs">2 hrs</text>
<polygon points="950.3,234.3 960.5,234.3 955.4,239.6" fill="#111"/>
</svg></body></html>
